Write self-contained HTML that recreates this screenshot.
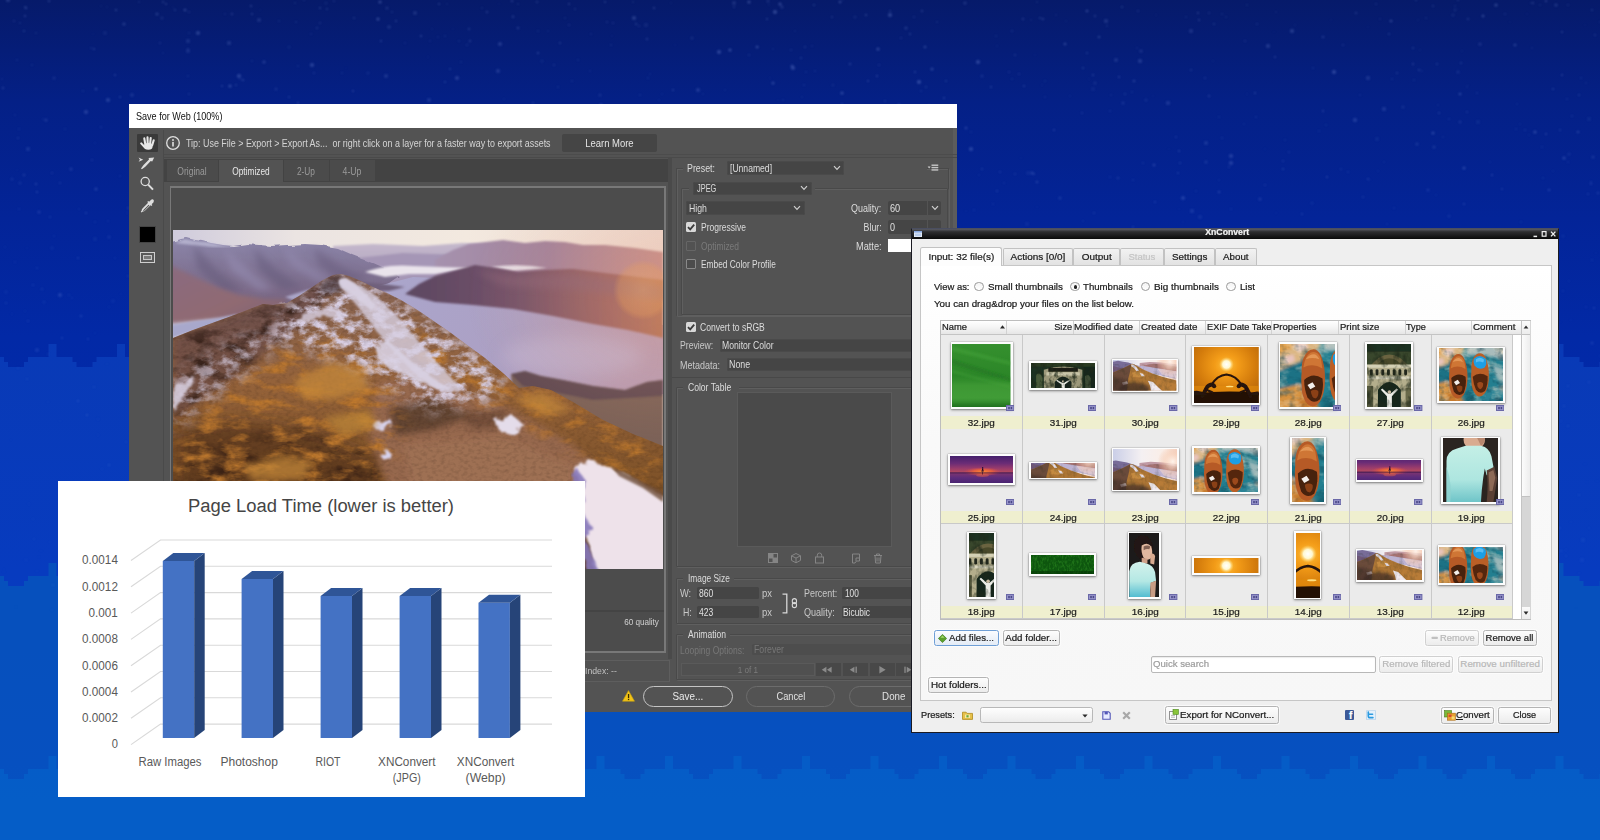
<!DOCTYPE html><html><head><meta charset="utf-8"><title>Image optimization comparison</title>
<style>html,body{margin:0;padding:0}body{width:1600px;height:840px;overflow:hidden;position:relative;background:#0a3fb4;font-family:"Liberation Sans",sans-serif}div{box-sizing:content-box}</style></head><body>
<svg id="bg" width="1600" height="840" viewBox="0 0 1600 840" style="position:absolute;left:0;top:0">
<defs><linearGradient id="bgg" x1="0" y1="0" x2="0" y2="1"><stop offset="0" stop-color="#061a6a"/><stop offset="0.12" stop-color="#042086"/><stop offset="0.26" stop-color="#032498"/><stop offset="0.40" stop-color="#0229a6"/><stop offset="0.68" stop-color="#002ab1"/><stop offset="0.91" stop-color="#002ab6"/><stop offset="1" stop-color="#012cb8"/></linearGradient><filter id="bb" x="-1%" y="-1%" width="102%" height="102%"><feGaussianBlur stdDeviation="0.7"/></filter><filter id="sb" x="-50%" y="-50%" width="200%" height="200%"><feGaussianBlur stdDeviation="0.8"/></filter></defs>
<rect width="1600" height="840" fill="url(#bgg)"/>
<path d="M0,840 L0,357 L-88.5,344 L-80.5,344 L-80.5,357 L-64.5,357 L-64.5,362 L-60.5,362 L-60.5,367 L-44.5,367 L-44.5,362 L-40.5,362 L-40.5,357 L-20.0,357 L-20.0,344 L-12.0,344 L-12.0,357 L4.0,357 L4.0,362 L8.0,362 L8.0,367 L24.0,367 L24.0,362 L28.0,362 L28.0,357 L48.5,357 L48.5,344 L56.5,344 L56.5,357 L72.5,357 L72.5,362 L76.5,362 L76.5,367 L92.5,367 L92.5,362 L96.5,362 L96.5,357 L117.0,357 L117.0,344 L125.0,344 L125.0,357 L141.0,357 L141.0,362 L145.0,362 L145.0,367 L161.0,367 L161.0,362 L165.0,362 L165.0,357 L185.5,357 L185.5,344 L193.5,344 L193.5,357 L209.5,357 L209.5,362 L213.5,362 L213.5,367 L229.5,367 L229.5,362 L233.5,362 L233.5,357 L254.0,357 L254.0,344 L262.0,344 L262.0,357 L278.0,357 L278.0,362 L282.0,362 L282.0,367 L298.0,367 L298.0,362 L302.0,362 L302.0,357 L322.5,357 L322.5,344 L330.5,344 L330.5,357 L346.5,357 L346.5,362 L350.5,362 L350.5,367 L366.5,367 L366.5,362 L370.5,362 L370.5,357 L391.0,357 L391.0,344 L399.0,344 L399.0,357 L415.0,357 L415.0,362 L419.0,362 L419.0,367 L435.0,367 L435.0,362 L439.0,362 L439.0,357 L459.5,357 L459.5,344 L467.5,344 L467.5,357 L483.5,357 L483.5,362 L487.5,362 L487.5,367 L503.5,367 L503.5,362 L507.5,362 L507.5,357 L528.0,357 L528.0,344 L536.0,344 L536.0,357 L552.0,357 L552.0,362 L556.0,362 L556.0,367 L572.0,367 L572.0,362 L576.0,362 L576.0,357 L596.5,357 L596.5,344 L604.5,344 L604.5,357 L620.5,357 L620.5,362 L624.5,362 L624.5,367 L640.5,367 L640.5,362 L644.5,362 L644.5,357 L665.0,357 L665.0,344 L673.0,344 L673.0,357 L689.0,357 L689.0,362 L693.0,362 L693.0,367 L709.0,367 L709.0,362 L713.0,362 L713.0,357 L733.5,357 L733.5,344 L741.5,344 L741.5,357 L757.5,357 L757.5,362 L761.5,362 L761.5,367 L777.5,367 L777.5,362 L781.5,362 L781.5,357 L802.0,357 L802.0,344 L810.0,344 L810.0,357 L826.0,357 L826.0,362 L830.0,362 L830.0,367 L846.0,367 L846.0,362 L850.0,362 L850.0,357 L870.5,357 L870.5,344 L878.5,344 L878.5,357 L894.5,357 L894.5,362 L898.5,362 L898.5,367 L914.5,367 L914.5,362 L918.5,362 L918.5,357 L939.0,357 L939.0,344 L947.0,344 L947.0,357 L963.0,357 L963.0,362 L967.0,362 L967.0,367 L983.0,367 L983.0,362 L987.0,362 L987.0,357 L1007.5,357 L1007.5,344 L1015.5,344 L1015.5,357 L1031.5,357 L1031.5,362 L1035.5,362 L1035.5,367 L1051.5,367 L1051.5,362 L1055.5,362 L1055.5,357 L1076.0,357 L1076.0,344 L1084.0,344 L1084.0,357 L1100.0,357 L1100.0,362 L1104.0,362 L1104.0,367 L1120.0,367 L1120.0,362 L1124.0,362 L1124.0,357 L1144.5,357 L1144.5,344 L1152.5,344 L1152.5,357 L1168.5,357 L1168.5,362 L1172.5,362 L1172.5,367 L1188.5,367 L1188.5,362 L1192.5,362 L1192.5,357 L1213.0,357 L1213.0,344 L1221.0,344 L1221.0,357 L1237.0,357 L1237.0,362 L1241.0,362 L1241.0,367 L1257.0,367 L1257.0,362 L1261.0,362 L1261.0,357 L1281.5,357 L1281.5,344 L1289.5,344 L1289.5,357 L1305.5,357 L1305.5,362 L1309.5,362 L1309.5,367 L1325.5,367 L1325.5,362 L1329.5,362 L1329.5,357 L1350.0,357 L1350.0,344 L1358.0,344 L1358.0,357 L1374.0,357 L1374.0,362 L1378.0,362 L1378.0,367 L1394.0,367 L1394.0,362 L1398.0,362 L1398.0,357 L1418.5,357 L1418.5,344 L1426.5,344 L1426.5,357 L1442.5,357 L1442.5,362 L1446.5,362 L1446.5,367 L1462.5,367 L1462.5,362 L1466.5,362 L1466.5,357 L1487.0,357 L1487.0,344 L1495.0,344 L1495.0,357 L1511.0,357 L1511.0,362 L1515.0,362 L1515.0,367 L1531.0,367 L1531.0,362 L1535.0,362 L1535.0,357 L1555.5,357 L1555.5,344 L1563.5,344 L1563.5,357 L1579.5,357 L1579.5,362 L1583.5,362 L1583.5,367 L1599.5,367 L1599.5,362 L1603.5,362 L1603.5,357 L1624.0,357 L1600,840 Z" fill="#2a85f8" fill-opacity="0.19" filter="url(#bb)"/>
<path d="M0,840 L0,576 L-88.5,563 L-80.5,563 L-80.5,576 L-64.5,576 L-64.5,581 L-60.5,581 L-60.5,586 L-44.5,586 L-44.5,581 L-40.5,581 L-40.5,576 L-20.0,576 L-20.0,563 L-12.0,563 L-12.0,576 L4.0,576 L4.0,581 L8.0,581 L8.0,586 L24.0,586 L24.0,581 L28.0,581 L28.0,576 L48.5,576 L48.5,563 L56.5,563 L56.5,576 L72.5,576 L72.5,581 L76.5,581 L76.5,586 L92.5,586 L92.5,581 L96.5,581 L96.5,576 L117.0,576 L117.0,563 L125.0,563 L125.0,576 L141.0,576 L141.0,581 L145.0,581 L145.0,586 L161.0,586 L161.0,581 L165.0,581 L165.0,576 L185.5,576 L185.5,563 L193.5,563 L193.5,576 L209.5,576 L209.5,581 L213.5,581 L213.5,586 L229.5,586 L229.5,581 L233.5,581 L233.5,576 L254.0,576 L254.0,563 L262.0,563 L262.0,576 L278.0,576 L278.0,581 L282.0,581 L282.0,586 L298.0,586 L298.0,581 L302.0,581 L302.0,576 L322.5,576 L322.5,563 L330.5,563 L330.5,576 L346.5,576 L346.5,581 L350.5,581 L350.5,586 L366.5,586 L366.5,581 L370.5,581 L370.5,576 L391.0,576 L391.0,563 L399.0,563 L399.0,576 L415.0,576 L415.0,581 L419.0,581 L419.0,586 L435.0,586 L435.0,581 L439.0,581 L439.0,576 L459.5,576 L459.5,563 L467.5,563 L467.5,576 L483.5,576 L483.5,581 L487.5,581 L487.5,586 L503.5,586 L503.5,581 L507.5,581 L507.5,576 L528.0,576 L528.0,563 L536.0,563 L536.0,576 L552.0,576 L552.0,581 L556.0,581 L556.0,586 L572.0,586 L572.0,581 L576.0,581 L576.0,576 L596.5,576 L596.5,563 L604.5,563 L604.5,576 L620.5,576 L620.5,581 L624.5,581 L624.5,586 L640.5,586 L640.5,581 L644.5,581 L644.5,576 L665.0,576 L665.0,563 L673.0,563 L673.0,576 L689.0,576 L689.0,581 L693.0,581 L693.0,586 L709.0,586 L709.0,581 L713.0,581 L713.0,576 L733.5,576 L733.5,563 L741.5,563 L741.5,576 L757.5,576 L757.5,581 L761.5,581 L761.5,586 L777.5,586 L777.5,581 L781.5,581 L781.5,576 L802.0,576 L802.0,563 L810.0,563 L810.0,576 L826.0,576 L826.0,581 L830.0,581 L830.0,586 L846.0,586 L846.0,581 L850.0,581 L850.0,576 L870.5,576 L870.5,563 L878.5,563 L878.5,576 L894.5,576 L894.5,581 L898.5,581 L898.5,586 L914.5,586 L914.5,581 L918.5,581 L918.5,576 L939.0,576 L939.0,563 L947.0,563 L947.0,576 L963.0,576 L963.0,581 L967.0,581 L967.0,586 L983.0,586 L983.0,581 L987.0,581 L987.0,576 L1007.5,576 L1007.5,563 L1015.5,563 L1015.5,576 L1031.5,576 L1031.5,581 L1035.5,581 L1035.5,586 L1051.5,586 L1051.5,581 L1055.5,581 L1055.5,576 L1076.0,576 L1076.0,563 L1084.0,563 L1084.0,576 L1100.0,576 L1100.0,581 L1104.0,581 L1104.0,586 L1120.0,586 L1120.0,581 L1124.0,581 L1124.0,576 L1144.5,576 L1144.5,563 L1152.5,563 L1152.5,576 L1168.5,576 L1168.5,581 L1172.5,581 L1172.5,586 L1188.5,586 L1188.5,581 L1192.5,581 L1192.5,576 L1213.0,576 L1213.0,563 L1221.0,563 L1221.0,576 L1237.0,576 L1237.0,581 L1241.0,581 L1241.0,586 L1257.0,586 L1257.0,581 L1261.0,581 L1261.0,576 L1281.5,576 L1281.5,563 L1289.5,563 L1289.5,576 L1305.5,576 L1305.5,581 L1309.5,581 L1309.5,586 L1325.5,586 L1325.5,581 L1329.5,581 L1329.5,576 L1350.0,576 L1350.0,563 L1358.0,563 L1358.0,576 L1374.0,576 L1374.0,581 L1378.0,581 L1378.0,586 L1394.0,586 L1394.0,581 L1398.0,581 L1398.0,576 L1418.5,576 L1418.5,563 L1426.5,563 L1426.5,576 L1442.5,576 L1442.5,581 L1446.5,581 L1446.5,586 L1462.5,586 L1462.5,581 L1466.5,581 L1466.5,576 L1487.0,576 L1487.0,563 L1495.0,563 L1495.0,576 L1511.0,576 L1511.0,581 L1515.0,581 L1515.0,586 L1531.0,586 L1531.0,581 L1535.0,581 L1535.0,576 L1555.5,576 L1555.5,563 L1563.5,563 L1563.5,576 L1579.5,576 L1579.5,581 L1583.5,581 L1583.5,586 L1599.5,586 L1599.5,581 L1603.5,581 L1603.5,576 L1624.0,576 L1600,840 Z" fill="#0da6b4" fill-opacity="0.2" filter="url(#bb)"/>
<path d="M0,840 L0,769 L-88.5,756 L-80.5,756 L-80.5,769 L-64.5,769 L-64.5,774 L-60.5,774 L-60.5,779 L-44.5,779 L-44.5,774 L-40.5,774 L-40.5,769 L-20.0,769 L-20.0,756 L-12.0,756 L-12.0,769 L4.0,769 L4.0,774 L8.0,774 L8.0,779 L24.0,779 L24.0,774 L28.0,774 L28.0,769 L48.5,769 L48.5,756 L56.5,756 L56.5,769 L72.5,769 L72.5,774 L76.5,774 L76.5,779 L92.5,779 L92.5,774 L96.5,774 L96.5,769 L117.0,769 L117.0,756 L125.0,756 L125.0,769 L141.0,769 L141.0,774 L145.0,774 L145.0,779 L161.0,779 L161.0,774 L165.0,774 L165.0,769 L185.5,769 L185.5,756 L193.5,756 L193.5,769 L209.5,769 L209.5,774 L213.5,774 L213.5,779 L229.5,779 L229.5,774 L233.5,774 L233.5,769 L254.0,769 L254.0,756 L262.0,756 L262.0,769 L278.0,769 L278.0,774 L282.0,774 L282.0,779 L298.0,779 L298.0,774 L302.0,774 L302.0,769 L322.5,769 L322.5,756 L330.5,756 L330.5,769 L346.5,769 L346.5,774 L350.5,774 L350.5,779 L366.5,779 L366.5,774 L370.5,774 L370.5,769 L391.0,769 L391.0,756 L399.0,756 L399.0,769 L415.0,769 L415.0,774 L419.0,774 L419.0,779 L435.0,779 L435.0,774 L439.0,774 L439.0,769 L459.5,769 L459.5,756 L467.5,756 L467.5,769 L483.5,769 L483.5,774 L487.5,774 L487.5,779 L503.5,779 L503.5,774 L507.5,774 L507.5,769 L528.0,769 L528.0,756 L536.0,756 L536.0,769 L552.0,769 L552.0,774 L556.0,774 L556.0,779 L572.0,779 L572.0,774 L576.0,774 L576.0,769 L596.5,769 L596.5,756 L604.5,756 L604.5,769 L620.5,769 L620.5,774 L624.5,774 L624.5,779 L640.5,779 L640.5,774 L644.5,774 L644.5,769 L665.0,769 L665.0,756 L673.0,756 L673.0,769 L689.0,769 L689.0,774 L693.0,774 L693.0,779 L709.0,779 L709.0,774 L713.0,774 L713.0,769 L733.5,769 L733.5,756 L741.5,756 L741.5,769 L757.5,769 L757.5,774 L761.5,774 L761.5,779 L777.5,779 L777.5,774 L781.5,774 L781.5,769 L802.0,769 L802.0,756 L810.0,756 L810.0,769 L826.0,769 L826.0,774 L830.0,774 L830.0,779 L846.0,779 L846.0,774 L850.0,774 L850.0,769 L870.5,769 L870.5,756 L878.5,756 L878.5,769 L894.5,769 L894.5,774 L898.5,774 L898.5,779 L914.5,779 L914.5,774 L918.5,774 L918.5,769 L939.0,769 L939.0,756 L947.0,756 L947.0,769 L963.0,769 L963.0,774 L967.0,774 L967.0,779 L983.0,779 L983.0,774 L987.0,774 L987.0,769 L1007.5,769 L1007.5,756 L1015.5,756 L1015.5,769 L1031.5,769 L1031.5,774 L1035.5,774 L1035.5,779 L1051.5,779 L1051.5,774 L1055.5,774 L1055.5,769 L1076.0,769 L1076.0,756 L1084.0,756 L1084.0,769 L1100.0,769 L1100.0,774 L1104.0,774 L1104.0,779 L1120.0,779 L1120.0,774 L1124.0,774 L1124.0,769 L1144.5,769 L1144.5,756 L1152.5,756 L1152.5,769 L1168.5,769 L1168.5,774 L1172.5,774 L1172.5,779 L1188.5,779 L1188.5,774 L1192.5,774 L1192.5,769 L1213.0,769 L1213.0,756 L1221.0,756 L1221.0,769 L1237.0,769 L1237.0,774 L1241.0,774 L1241.0,779 L1257.0,779 L1257.0,774 L1261.0,774 L1261.0,769 L1281.5,769 L1281.5,756 L1289.5,756 L1289.5,769 L1305.5,769 L1305.5,774 L1309.5,774 L1309.5,779 L1325.5,779 L1325.5,774 L1329.5,774 L1329.5,769 L1350.0,769 L1350.0,756 L1358.0,756 L1358.0,769 L1374.0,769 L1374.0,774 L1378.0,774 L1378.0,779 L1394.0,779 L1394.0,774 L1398.0,774 L1398.0,769 L1418.5,769 L1418.5,756 L1426.5,756 L1426.5,769 L1442.5,769 L1442.5,774 L1446.5,774 L1446.5,779 L1462.5,779 L1462.5,774 L1466.5,774 L1466.5,769 L1487.0,769 L1487.0,756 L1495.0,756 L1495.0,769 L1511.0,769 L1511.0,774 L1515.0,774 L1515.0,779 L1531.0,779 L1531.0,774 L1535.0,774 L1535.0,769 L1555.5,769 L1555.5,756 L1563.5,756 L1563.5,769 L1579.5,769 L1579.5,774 L1583.5,774 L1583.5,779 L1599.5,779 L1599.5,774 L1603.5,774 L1603.5,769 L1624.0,769 L1600,840 Z" fill="#0c9ee8" fill-opacity="0.15" filter="url(#bb)"/>
<g fill="#8aa2ea" filter="url(#sb)"><circle cx="1368" cy="78" r="2.1" opacity="0.18"/><circle cx="982" cy="76" r="1.6" opacity="0.14"/><circle cx="1331" cy="20" r="0.7" opacity="0.13"/><circle cx="387" cy="8" r="1.6" opacity="0.16"/><circle cx="946" cy="81" r="1.0" opacity="0.22"/><circle cx="504" cy="99" r="1.0" opacity="0.08"/><circle cx="901" cy="38" r="0.8" opacity="0.29"/><circle cx="1483" cy="16" r="1.3" opacity="0.33"/><circle cx="636" cy="24" r="1.0" opacity="0.27"/><circle cx="432" cy="29" r="1.1" opacity="0.08"/><circle cx="162" cy="18" r="1.6" opacity="0.12"/><circle cx="1231" cy="209" r="1.3" opacity="0.08"/><circle cx="673" cy="90" r="1.0" opacity="0.27"/><circle cx="1560" cy="322" r="0.7" opacity="0.08"/><circle cx="966" cy="211" r="0.8" opacity="0.08"/><circle cx="1468" cy="85" r="0.7" opacity="0.09"/><circle cx="1540" cy="5" r="0.8" opacity="0.20"/><circle cx="1169" cy="149" r="0.8" opacity="0.08"/><circle cx="1464" cy="168" r="1.6" opacity="0.25"/><circle cx="1394" cy="208" r="0.7" opacity="0.23"/><circle cx="20" cy="23" r="0.8" opacity="0.24"/><circle cx="1589" cy="528" r="1.1" opacity="0.06"/><circle cx="18" cy="138" r="1.0" opacity="0.18"/><circle cx="1206" cy="162" r="1.6" opacity="0.17"/><circle cx="1520" cy="124" r="0.9" opacity="0.09"/><circle cx="1326" cy="125" r="0.7" opacity="0.22"/><circle cx="648" cy="78" r="1.0" opacity="0.13"/><circle cx="225" cy="14" r="0.8" opacity="0.19"/><circle cx="1095" cy="83" r="1.6" opacity="0.13"/><circle cx="1428" cy="190" r="1.6" opacity="0.15"/><circle cx="1042" cy="85" r="0.8" opacity="0.12"/><circle cx="1265" cy="149" r="0.7" opacity="0.14"/><circle cx="102" cy="469" r="0.9" opacity="0.09"/><circle cx="1106" cy="21" r="2.1" opacity="0.19"/><circle cx="757" cy="47" r="1.3" opacity="0.30"/><circle cx="1247" cy="5" r="1.0" opacity="0.12"/><circle cx="19" cy="129" r="1.1" opacity="0.12"/><circle cx="37" cy="350" r="2.1" opacity="0.14"/><circle cx="311" cy="34" r="1.0" opacity="0.11"/><circle cx="60" cy="295" r="2.1" opacity="0.20"/><circle cx="770" cy="78" r="0.8" opacity="0.12"/><circle cx="312" cy="65" r="2.1" opacity="0.26"/><circle cx="518" cy="28" r="1.3" opacity="0.22"/><circle cx="17" cy="170" r="0.7" opacity="0.11"/><circle cx="650" cy="74" r="0.8" opacity="0.16"/><circle cx="1600" cy="356" r="0.8" opacity="0.15"/><circle cx="1568" cy="5" r="0.8" opacity="0.27"/><circle cx="1037" cy="2" r="1.0" opacity="0.14"/><circle cx="1295" cy="25" r="0.7" opacity="0.17"/><circle cx="1502" cy="189" r="0.9" opacity="0.23"/><circle cx="392" cy="12" r="0.9" opacity="0.18"/><circle cx="1095" cy="16" r="1.1" opacity="0.27"/><circle cx="1449" cy="216" r="1.6" opacity="0.11"/><circle cx="1209" cy="13" r="0.8" opacity="0.32"/><circle cx="1378" cy="171" r="0.9" opacity="0.09"/><circle cx="381" cy="41" r="1.0" opacity="0.27"/><circle cx="1000" cy="172" r="1.0" opacity="0.19"/><circle cx="1205" cy="78" r="1.0" opacity="0.19"/><circle cx="1045" cy="81" r="0.7" opacity="0.22"/><circle cx="15" cy="115" r="0.7" opacity="0.21"/><circle cx="1461" cy="63" r="1.0" opacity="0.22"/><circle cx="791" cy="50" r="0.8" opacity="0.27"/><circle cx="1196" cy="191" r="0.9" opacity="0.13"/><circle cx="591" cy="34" r="1.1" opacity="0.10"/><circle cx="1285" cy="140" r="1.1" opacity="0.11"/><circle cx="354" cy="18" r="0.9" opacity="0.22"/><circle cx="438" cy="37" r="1.1" opacity="0.10"/><circle cx="1015" cy="55" r="1.3" opacity="0.13"/><circle cx="1464" cy="204" r="1.1" opacity="0.23"/><circle cx="95" cy="143" r="0.8" opacity="0.13"/><circle cx="27" cy="248" r="0.7" opacity="0.11"/><circle cx="450" cy="69" r="1.0" opacity="0.22"/><circle cx="380" cy="2" r="1.6" opacity="0.31"/><circle cx="252" cy="61" r="1.1" opacity="0.11"/><circle cx="1589" cy="119" r="2.1" opacity="0.08"/><circle cx="915" cy="72" r="1.0" opacity="0.27"/><circle cx="1542" cy="147" r="1.3" opacity="0.08"/><circle cx="1099" cy="37" r="1.3" opacity="0.24"/><circle cx="20" cy="183" r="1.6" opacity="0.11"/><circle cx="612" cy="36" r="0.8" opacity="0.11"/><circle cx="1009" cy="72" r="1.0" opacity="0.17"/><circle cx="52" cy="610" r="1.3" opacity="0.04"/><circle cx="222" cy="86" r="0.9" opacity="0.26"/><circle cx="978" cy="62" r="2.1" opacity="0.29"/><circle cx="919" cy="82" r="2.1" opacity="0.30"/><circle cx="317" cy="28" r="1.0" opacity="0.20"/><circle cx="1168" cy="103" r="2.1" opacity="0.19"/><circle cx="1587" cy="482" r="0.9" opacity="0.04"/><circle cx="1319" cy="131" r="1.1" opacity="0.12"/><circle cx="1579" cy="573" r="0.9" opacity="0.05"/><circle cx="749" cy="55" r="1.3" opacity="0.10"/><circle cx="1260" cy="199" r="1.6" opacity="0.18"/><circle cx="188" cy="41" r="2.1" opacity="0.16"/><circle cx="87" cy="415" r="1.3" opacity="0.13"/><circle cx="1403" cy="107" r="1.6" opacity="0.12"/><circle cx="842" cy="104" r="1.0" opacity="0.22"/><circle cx="675" cy="45" r="0.8" opacity="0.10"/><circle cx="1268" cy="46" r="2.1" opacity="0.22"/><circle cx="50" cy="542" r="1.0" opacity="0.05"/><circle cx="1341" cy="169" r="1.6" opacity="0.07"/><circle cx="1012" cy="79" r="0.7" opacity="0.22"/><circle cx="1141" cy="51" r="1.6" opacity="0.18"/><circle cx="314" cy="73" r="1.0" opacity="0.19"/><circle cx="944" cy="98" r="1.0" opacity="0.27"/><circle cx="289" cy="97" r="0.9" opacity="0.22"/><circle cx="1581" cy="78" r="0.9" opacity="0.14"/><circle cx="877" cy="76" r="0.9" opacity="0.30"/><circle cx="54" cy="236" r="1.3" opacity="0.06"/><circle cx="1426" cy="18" r="0.8" opacity="0.22"/><circle cx="1032" cy="173" r="1.6" opacity="0.22"/><circle cx="1397" cy="73" r="0.9" opacity="0.22"/><circle cx="86" cy="213" r="1.1" opacity="0.22"/><circle cx="1313" cy="68" r="1.0" opacity="0.13"/><circle cx="1532" cy="48" r="0.9" opacity="0.11"/><circle cx="1492" cy="175" r="1.1" opacity="0.25"/><circle cx="1477" cy="93" r="0.9" opacity="0.16"/><circle cx="1040" cy="18" r="1.1" opacity="0.22"/><circle cx="79" cy="209" r="1.0" opacity="0.09"/><circle cx="879" cy="65" r="1.0" opacity="0.17"/><circle cx="1589" cy="382" r="1.6" opacity="0.07"/><circle cx="613" cy="23" r="1.0" opacity="0.17"/><circle cx="439" cy="4" r="0.9" opacity="0.27"/><circle cx="578" cy="60" r="1.1" opacity="0.11"/><circle cx="236" cy="85" r="1.0" opacity="0.20"/><circle cx="719" cy="52" r="2.1" opacity="0.29"/><circle cx="1012" cy="31" r="1.3" opacity="0.11"/><circle cx="1125" cy="94" r="1.3" opacity="0.12"/><circle cx="1229" cy="167" r="1.0" opacity="0.17"/><circle cx="37" cy="192" r="1.1" opacity="0.24"/><circle cx="1460" cy="122" r="1.3" opacity="0.18"/><circle cx="116" cy="10" r="1.1" opacity="0.31"/><circle cx="1132" cy="92" r="0.8" opacity="0.22"/><circle cx="993" cy="204" r="1.3" opacity="0.07"/><circle cx="109" cy="237" r="1.6" opacity="0.13"/><circle cx="1455" cy="10" r="0.9" opacity="0.25"/><circle cx="240" cy="79" r="1.0" opacity="0.13"/><circle cx="6" cy="292" r="2.1" opacity="0.06"/><circle cx="166" cy="4" r="1.0" opacity="0.26"/><circle cx="1034" cy="174" r="0.9" opacity="0.25"/><circle cx="1417" cy="144" r="1.6" opacity="0.17"/><circle cx="1087" cy="11" r="1.3" opacity="0.30"/><circle cx="86" cy="112" r="2.1" opacity="0.23"/><circle cx="1110" cy="111" r="1.0" opacity="0.15"/><circle cx="1093" cy="75" r="1.0" opacity="0.27"/><circle cx="295" cy="3" r="0.9" opacity="0.15"/><circle cx="1087" cy="53" r="0.9" opacity="0.25"/><circle cx="189" cy="12" r="1.0" opacity="0.17"/><circle cx="42" cy="289" r="1.6" opacity="0.08"/><circle cx="108" cy="221" r="1.0" opacity="0.10"/><circle cx="1155" cy="202" r="0.9" opacity="0.25"/><circle cx="1387" cy="224" r="0.8" opacity="0.16"/><circle cx="518" cy="4" r="0.9" opacity="0.15"/><circle cx="11" cy="440" r="0.8" opacity="0.04"/><circle cx="538" cy="53" r="1.0" opacity="0.32"/><circle cx="654" cy="8" r="1.1" opacity="0.29"/><circle cx="634" cy="18" r="2.1" opacity="0.24"/><circle cx="1323" cy="111" r="1.0" opacity="0.28"/><circle cx="1505" cy="14" r="0.7" opacity="0.32"/><circle cx="1206" cy="143" r="2.1" opacity="0.17"/><circle cx="1418" cy="20" r="1.1" opacity="0.08"/><circle cx="1455" cy="6" r="0.9" opacity="0.14"/><circle cx="107" cy="364" r="0.8" opacity="0.08"/><circle cx="342" cy="73" r="0.7" opacity="0.25"/><circle cx="15" cy="262" r="1.3" opacity="0.07"/><circle cx="279" cy="21" r="0.8" opacity="0.22"/><circle cx="840" cy="2" r="1.3" opacity="0.32"/><circle cx="88" cy="339" r="1.1" opacity="0.18"/><circle cx="1480" cy="44" r="1.6" opacity="0.18"/><circle cx="558" cy="87" r="0.7" opacity="0.27"/><circle cx="115" cy="258" r="0.7" opacity="0.19"/><circle cx="1591" cy="184" r="1.1" opacity="0.20"/><circle cx="289" cy="47" r="1.6" opacity="0.09"/><circle cx="572" cy="81" r="0.8" opacity="0.23"/><circle cx="1178" cy="173" r="1.0" opacity="0.22"/><circle cx="320" cy="23" r="1.0" opacity="0.18"/><circle cx="1312" cy="203" r="1.6" opacity="0.09"/><circle cx="198" cy="33" r="2.1" opacity="0.25"/><circle cx="662" cy="94" r="0.8" opacity="0.15"/><circle cx="445" cy="36" r="0.8" opacity="0.21"/><circle cx="26" cy="8" r="1.1" opacity="0.33"/><circle cx="1043" cy="19" r="1.0" opacity="0.33"/><circle cx="1588" cy="194" r="1.0" opacity="0.19"/><circle cx="1433" cy="6" r="1.1" opacity="0.19"/><circle cx="812" cy="46" r="1.0" opacity="0.11"/><circle cx="17" cy="60" r="0.8" opacity="0.25"/><circle cx="1140" cy="61" r="2.1" opacity="0.22"/><circle cx="1356" cy="13" r="1.3" opacity="0.16"/><circle cx="850" cy="64" r="1.3" opacity="0.20"/><circle cx="640" cy="95" r="0.8" opacity="0.23"/><circle cx="52" cy="173" r="1.0" opacity="0.17"/><circle cx="1546" cy="1" r="1.1" opacity="0.33"/><circle cx="1222" cy="14" r="0.8" opacity="0.22"/><circle cx="1093" cy="89" r="2.1" opacity="0.07"/><circle cx="1179" cy="209" r="0.8" opacity="0.09"/><circle cx="1389" cy="34" r="1.1" opacity="0.21"/><circle cx="1343" cy="45" r="1.0" opacity="0.19"/><circle cx="50" cy="217" r="1.3" opacity="0.10"/><circle cx="554" cy="65" r="1.1" opacity="0.16"/><circle cx="1348" cy="172" r="0.9" opacity="0.16"/><circle cx="1569" cy="154" r="1.6" opacity="0.11"/><circle cx="1561" cy="551" r="1.6" opacity="0.06"/><circle cx="188" cy="76" r="0.8" opacity="0.23"/><circle cx="801" cy="58" r="1.1" opacity="0.21"/><circle cx="1553" cy="171" r="1.0" opacity="0.08"/><circle cx="1255" cy="93" r="1.0" opacity="0.27"/><circle cx="1180" cy="163" r="0.9" opacity="0.22"/><circle cx="33" cy="285" r="1.0" opacity="0.16"/><circle cx="121" cy="294" r="0.8" opacity="0.10"/><circle cx="4" cy="569" r="0.8" opacity="0.04"/><circle cx="1066" cy="21" r="0.7" opacity="0.18"/><circle cx="163" cy="53" r="1.0" opacity="0.09"/><circle cx="1439" cy="113" r="1.0" opacity="0.23"/><circle cx="1496" cy="5" r="1.6" opacity="0.29"/><circle cx="1594" cy="308" r="1.1" opacity="0.20"/><circle cx="239" cy="76" r="2.1" opacity="0.27"/><circle cx="109" cy="465" r="1.3" opacity="0.12"/><circle cx="1438" cy="105" r="0.7" opacity="0.20"/><circle cx="533" cy="103" r="1.0" opacity="0.20"/><circle cx="327" cy="9" r="1.0" opacity="0.22"/><circle cx="126" cy="442" r="1.0" opacity="0.09"/><circle cx="72" cy="298" r="0.9" opacity="0.11"/><circle cx="1265" cy="185" r="1.0" opacity="0.17"/><circle cx="1510" cy="22" r="0.7" opacity="0.09"/><circle cx="53" cy="585" r="1.3" opacity="0.09"/><circle cx="230" cy="86" r="1.6" opacity="0.29"/><circle cx="1490" cy="162" r="0.9" opacity="0.09"/><circle cx="1123" cy="103" r="1.6" opacity="0.15"/><circle cx="115" cy="75" r="1.1" opacity="0.23"/><circle cx="26" cy="560" r="2.1" opacity="0.04"/><circle cx="1596" cy="253" r="0.7" opacity="0.09"/><circle cx="39" cy="212" r="1.6" opacity="0.18"/><circle cx="101" cy="6" r="1.1" opacity="0.08"/><circle cx="487" cy="12" r="1.0" opacity="0.30"/><circle cx="1516" cy="129" r="0.8" opacity="0.21"/><circle cx="5" cy="247" r="0.8" opacity="0.14"/><circle cx="1060" cy="198" r="1.6" opacity="0.17"/><circle cx="1023" cy="19" r="0.9" opacity="0.32"/><circle cx="81" cy="316" r="1.3" opacity="0.17"/><circle cx="565" cy="18" r="0.8" opacity="0.20"/><circle cx="1566" cy="556" r="1.0" opacity="0.09"/><circle cx="37" cy="268" r="1.1" opacity="0.13"/><circle cx="1031" cy="20" r="0.9" opacity="0.11"/><circle cx="1571" cy="522" r="1.0" opacity="0.05"/><circle cx="997" cy="46" r="0.7" opacity="0.18"/><circle cx="1138" cy="11" r="0.9" opacity="0.21"/><circle cx="1567" cy="99" r="0.8" opacity="0.23"/><circle cx="43" cy="119" r="0.8" opacity="0.14"/><circle cx="105" cy="33" r="2.1" opacity="0.09"/><circle cx="929" cy="105" r="1.1" opacity="0.16"/><circle cx="671" cy="3" r="0.8" opacity="0.13"/><circle cx="1226" cy="17" r="0.9" opacity="0.12"/><circle cx="1276" cy="12" r="0.7" opacity="0.20"/><circle cx="692" cy="38" r="1.6" opacity="0.12"/><circle cx="1592" cy="260" r="1.0" opacity="0.12"/><circle cx="1137" cy="48" r="0.7" opacity="0.21"/><circle cx="991" cy="87" r="1.0" opacity="0.27"/><circle cx="1021" cy="158" r="0.7" opacity="0.11"/><circle cx="1392" cy="79" r="0.7" opacity="0.26"/><circle cx="1133" cy="227" r="1.1" opacity="0.18"/><circle cx="120" cy="97" r="1.0" opacity="0.24"/><circle cx="1045" cy="97" r="0.8" opacity="0.19"/><circle cx="1568" cy="162" r="1.3" opacity="0.07"/><circle cx="83" cy="91" r="1.3" opacity="0.09"/><circle cx="1564" cy="406" r="1.1" opacity="0.14"/><circle cx="251" cy="6" r="1.1" opacity="0.29"/><circle cx="814" cy="5" r="1.1" opacity="0.22"/><circle cx="792" cy="66" r="1.6" opacity="0.23"/><circle cx="157" cy="14" r="1.6" opacity="0.21"/><circle cx="1586" cy="307" r="1.0" opacity="0.11"/><circle cx="1214" cy="24" r="1.0" opacity="0.22"/><circle cx="41" cy="551" r="0.7" opacity="0.08"/><circle cx="1122" cy="7" r="1.0" opacity="0.24"/><circle cx="1579" cy="95" r="1.0" opacity="0.21"/><circle cx="1419" cy="70" r="0.9" opacity="0.29"/><circle cx="1083" cy="68" r="1.1" opacity="0.22"/><circle cx="71" cy="169" r="1.6" opacity="0.19"/><circle cx="1380" cy="19" r="0.8" opacity="0.18"/><circle cx="1247" cy="94" r="0.7" opacity="0.15"/><circle cx="24" cy="175" r="1.3" opacity="0.18"/><circle cx="430" cy="41" r="0.8" opacity="0.19"/><circle cx="482" cy="8" r="0.7" opacity="0.24"/><circle cx="457" cy="78" r="2.1" opacity="0.23"/><circle cx="802" cy="97" r="1.0" opacity="0.09"/><circle cx="890" cy="11" r="1.0" opacity="0.21"/><circle cx="1585" cy="25" r="0.8" opacity="0.08"/><circle cx="1583" cy="540" r="2.1" opacity="0.08"/><circle cx="932" cy="69" r="1.6" opacity="0.25"/><circle cx="498" cy="71" r="2.1" opacity="0.20"/><circle cx="1562" cy="75" r="1.0" opacity="0.26"/><circle cx="1037" cy="207" r="0.7" opacity="0.11"/><circle cx="298" cy="103" r="1.0" opacity="0.28"/><circle cx="1065" cy="44" r="1.3" opacity="0.31"/><circle cx="512" cy="1" r="1.3" opacity="0.21"/><circle cx="18" cy="368" r="1.0" opacity="0.11"/><circle cx="775" cy="12" r="2.1" opacity="0.30"/><circle cx="54" cy="78" r="1.6" opacity="0.13"/><circle cx="1156" cy="15" r="0.8" opacity="0.12"/><circle cx="260" cy="10" r="0.7" opacity="0.14"/><circle cx="1035" cy="55" r="0.7" opacity="0.11"/><circle cx="368" cy="73" r="1.6" opacity="0.10"/><circle cx="537" cy="2" r="1.3" opacity="0.15"/><circle cx="1133" cy="180" r="0.8" opacity="0.24"/><circle cx="65" cy="129" r="1.0" opacity="0.12"/><circle cx="1595" cy="35" r="0.9" opacity="0.23"/><circle cx="1384" cy="162" r="1.0" opacity="0.09"/><circle cx="1568" cy="426" r="1.1" opacity="0.11"/><circle cx="795" cy="31" r="0.7" opacity="0.19"/><circle cx="926" cy="87" r="1.3" opacity="0.12"/><circle cx="1146" cy="100" r="1.6" opacity="0.11"/><circle cx="899" cy="105" r="1.6" opacity="0.19"/><circle cx="93" cy="34" r="0.7" opacity="0.11"/><circle cx="1082" cy="113" r="1.0" opacity="0.19"/><circle cx="1370" cy="180" r="0.8" opacity="0.07"/><circle cx="259" cy="20" r="2.1" opacity="0.17"/><circle cx="1560" cy="130" r="1.0" opacity="0.20"/><circle cx="749" cy="2" r="1.6" opacity="0.30"/><circle cx="94" cy="49" r="1.1" opacity="0.24"/><circle cx="1585" cy="464" r="1.0" opacity="0.04"/><circle cx="974" cy="210" r="1.0" opacity="0.13"/><circle cx="1368" cy="27" r="0.8" opacity="0.09"/><circle cx="639" cy="26" r="0.9" opacity="0.19"/><circle cx="910" cy="34" r="1.0" opacity="0.27"/><circle cx="773" cy="49" r="0.9" opacity="0.10"/><circle cx="78" cy="401" r="1.3" opacity="0.14"/><circle cx="175" cy="10" r="1.1" opacity="0.20"/><circle cx="1458" cy="72" r="1.6" opacity="0.14"/><circle cx="1467" cy="87" r="0.8" opacity="0.17"/><circle cx="1384" cy="109" r="2.1" opacity="0.19"/><circle cx="189" cy="33" r="0.9" opacity="0.14"/><circle cx="590" cy="71" r="1.0" opacity="0.10"/><circle cx="1037" cy="182" r="1.3" opacity="0.22"/><circle cx="1569" cy="281" r="0.8" opacity="0.14"/><circle cx="48" cy="354" r="1.1" opacity="0.12"/><circle cx="19" cy="209" r="0.8" opacity="0.21"/><circle cx="965" cy="3" r="1.6" opacity="0.20"/><circle cx="1292" cy="31" r="2.1" opacity="0.24"/><circle cx="806" cy="72" r="0.9" opacity="0.14"/><circle cx="500" cy="44" r="2.1" opacity="0.21"/><circle cx="232" cy="14" r="0.9" opacity="0.32"/><circle cx="1245" cy="41" r="0.9" opacity="0.19"/><circle cx="833" cy="85" r="1.6" opacity="0.08"/><circle cx="95" cy="239" r="2.1" opacity="0.08"/><circle cx="1579" cy="495" r="1.3" opacity="0.09"/><circle cx="758" cy="47" r="1.1" opacity="0.10"/><circle cx="1116" cy="60" r="2.1" opacity="0.17"/><circle cx="575" cy="9" r="0.8" opacity="0.31"/><circle cx="1070" cy="96" r="1.1" opacity="0.08"/><circle cx="94" cy="387" r="1.3" opacity="0.09"/><circle cx="1586" cy="83" r="1.0" opacity="0.10"/><circle cx="27" cy="379" r="1.1" opacity="0.12"/><circle cx="1274" cy="32" r="0.7" opacity="0.08"/><circle cx="1213" cy="61" r="1.0" opacity="0.08"/><circle cx="769" cy="5" r="0.7" opacity="0.17"/><circle cx="1582" cy="560" r="2.1" opacity="0.07"/><circle cx="1453" cy="15" r="1.6" opacity="0.11"/><circle cx="12" cy="314" r="1.0" opacity="0.07"/><circle cx="1244" cy="124" r="0.8" opacity="0.16"/><circle cx="160" cy="43" r="0.8" opacity="0.30"/><circle cx="421" cy="36" r="1.0" opacity="0.32"/><circle cx="1553" cy="89" r="1.0" opacity="0.24"/><circle cx="185" cy="10" r="1.3" opacity="0.30"/><circle cx="98" cy="419" r="1.6" opacity="0.04"/><circle cx="1110" cy="177" r="0.8" opacity="0.22"/><circle cx="33" cy="519" r="0.9" opacity="0.09"/><circle cx="982" cy="169" r="1.1" opacity="0.19"/><circle cx="979" cy="175" r="0.7" opacity="0.19"/><circle cx="1436" cy="195" r="0.7" opacity="0.17"/><circle cx="1468" cy="19" r="1.3" opacity="0.16"/><circle cx="1191" cy="31" r="2.1" opacity="0.18"/><circle cx="1283" cy="161" r="1.0" opacity="0.18"/><circle cx="1433" cy="133" r="1.6" opacity="0.25"/><circle cx="1186" cy="17" r="0.9" opacity="0.14"/><circle cx="95" cy="222" r="0.8" opacity="0.20"/><circle cx="36" cy="33" r="0.9" opacity="0.15"/><circle cx="971" cy="149" r="2.1" opacity="0.27"/><circle cx="843" cy="0" r="0.9" opacity="0.10"/><circle cx="469" cy="29" r="1.3" opacity="0.17"/><circle cx="304" cy="0" r="0.8" opacity="0.28"/><circle cx="1571" cy="320" r="0.7" opacity="0.12"/><circle cx="1529" cy="135" r="1.0" opacity="0.08"/><circle cx="29" cy="504" r="0.9" opacity="0.08"/><circle cx="866" cy="15" r="1.1" opacity="0.30"/><circle cx="346" cy="68" r="0.7" opacity="0.07"/><circle cx="1517" cy="104" r="1.0" opacity="0.09"/><circle cx="855" cy="17" r="1.6" opacity="0.10"/><circle cx="1183" cy="222" r="0.8" opacity="0.10"/><circle cx="601" cy="105" r="1.6" opacity="0.28"/><circle cx="1111" cy="95" r="1.0" opacity="0.10"/><circle cx="1360" cy="95" r="0.8" opacity="0.19"/><circle cx="378" cy="19" r="1.6" opacity="0.32"/><circle cx="334" cy="1" r="0.9" opacity="0.20"/><circle cx="1531" cy="3" r="1.0" opacity="0.11"/><circle cx="1578" cy="132" r="1.3" opacity="0.23"/><circle cx="1546" cy="134" r="1.0" opacity="0.26"/><circle cx="1478" cy="122" r="2.1" opacity="0.08"/><circle cx="128" cy="208" r="1.0" opacity="0.20"/><circle cx="1515" cy="45" r="1.3" opacity="0.28"/><circle cx="127" cy="213" r="0.9" opacity="0.08"/><circle cx="124" cy="24" r="1.6" opacity="0.22"/><circle cx="415" cy="13" r="2.1" opacity="0.17"/><circle cx="25" cy="7" r="1.3" opacity="0.12"/><circle cx="25" cy="311" r="1.0" opacity="0.08"/><circle cx="971" cy="132" r="1.0" opacity="0.12"/><circle cx="60" cy="421" r="0.7" opacity="0.11"/><circle cx="396" cy="21" r="1.0" opacity="0.27"/><circle cx="1416" cy="0" r="0.9" opacity="0.24"/><circle cx="966" cy="128" r="1.3" opacity="0.26"/><circle cx="1153" cy="96" r="0.7" opacity="0.13"/><circle cx="188" cy="51" r="2.1" opacity="0.15"/><circle cx="128" cy="276" r="0.9" opacity="0.15"/><circle cx="542" cy="61" r="1.6" opacity="0.09"/><circle cx="28" cy="321" r="1.0" opacity="0.17"/><circle cx="1355" cy="120" r="2.1" opacity="0.22"/><circle cx="1422" cy="71" r="0.9" opacity="0.11"/><circle cx="1368" cy="179" r="1.0" opacity="0.24"/><circle cx="6" cy="303" r="1.3" opacity="0.10"/><circle cx="461" cy="62" r="1.0" opacity="0.12"/><circle cx="1563" cy="291" r="1.1" opacity="0.11"/><circle cx="1598" cy="193" r="1.3" opacity="0.17"/><circle cx="243" cy="80" r="1.1" opacity="0.30"/><circle cx="25" cy="16" r="1.0" opacity="0.33"/><circle cx="32" cy="65" r="0.7" opacity="0.24"/><circle cx="773" cy="83" r="1.6" opacity="0.25"/><circle cx="778" cy="100" r="0.7" opacity="0.09"/><circle cx="386" cy="76" r="2.1" opacity="0.17"/><circle cx="163" cy="2" r="1.0" opacity="0.27"/><circle cx="1593" cy="157" r="1.6" opacity="0.16"/><circle cx="815" cy="71" r="0.8" opacity="0.25"/><circle cx="1586" cy="510" r="0.8" opacity="0.04"/><circle cx="868" cy="81" r="1.0" opacity="0.26"/><circle cx="1592" cy="343" r="1.6" opacity="0.15"/><circle cx="132" cy="95" r="2.1" opacity="0.13"/><circle cx="12" cy="179" r="1.6" opacity="0.11"/><circle cx="16" cy="607" r="1.0" opacity="0.03"/><circle cx="28" cy="149" r="2.1" opacity="0.16"/><circle cx="1094" cy="213" r="1.1" opacity="0.16"/><circle cx="1543" cy="178" r="0.7" opacity="0.22"/><circle cx="793" cy="68" r="2.1" opacity="0.26"/><circle cx="108" cy="100" r="2.1" opacity="0.24"/><circle cx="296" cy="22" r="1.0" opacity="0.15"/><circle cx="1327" cy="177" r="1.0" opacity="0.26"/><circle cx="937" cy="22" r="1.0" opacity="0.14"/><circle cx="429" cy="100" r="2.1" opacity="0.17"/><circle cx="1257" cy="24" r="0.8" opacity="0.28"/><circle cx="447" cy="4" r="0.9" opacity="0.10"/><circle cx="1334" cy="72" r="2.1" opacity="0.29"/><circle cx="1209" cy="96" r="1.1" opacity="0.26"/><circle cx="607" cy="22" r="0.9" opacity="0.21"/><circle cx="1199" cy="20" r="1.1" opacity="0.25"/><circle cx="69" cy="295" r="1.3" opacity="0.08"/><circle cx="405" cy="43" r="0.7" opacity="0.23"/><circle cx="1054" cy="130" r="1.1" opacity="0.23"/><circle cx="1134" cy="81" r="1.3" opacity="0.23"/><circle cx="1256" cy="117" r="0.9" opacity="0.16"/><circle cx="1559" cy="528" r="1.6" opacity="0.10"/><circle cx="734" cy="7" r="1.1" opacity="0.18"/><circle cx="1004" cy="183" r="1.0" opacity="0.10"/><circle cx="459" cy="41" r="0.7" opacity="0.24"/><circle cx="1323" cy="37" r="1.3" opacity="0.21"/><circle cx="428" cy="57" r="0.8" opacity="0.12"/><circle cx="1027" cy="224" r="2.1" opacity="0.07"/><circle cx="470" cy="41" r="1.3" opacity="0.19"/><circle cx="59" cy="591" r="1.0" opacity="0.06"/><circle cx="783" cy="100" r="0.7" opacity="0.23"/><circle cx="1231" cy="156" r="2.1" opacity="0.23"/><circle cx="1549" cy="190" r="1.3" opacity="0.21"/><circle cx="1107" cy="26" r="0.7" opacity="0.31"/><circle cx="1434" cy="147" r="1.6" opacity="0.17"/><circle cx="62" cy="338" r="1.3" opacity="0.14"/><circle cx="276" cy="89" r="1.6" opacity="0.13"/><circle cx="298" cy="66" r="0.7" opacity="0.29"/><circle cx="96" cy="89" r="1.3" opacity="0.29"/><circle cx="229" cy="43" r="2.1" opacity="0.19"/><circle cx="453" cy="29" r="0.7" opacity="0.11"/><circle cx="1191" cy="70" r="0.9" opacity="0.22"/><circle cx="120" cy="176" r="0.8" opacity="0.19"/><circle cx="611" cy="45" r="1.0" opacity="0.14"/><circle cx="600" cy="95" r="1.6" opacity="0.13"/><circle cx="906" cy="28" r="1.6" opacity="0.20"/><circle cx="1563" cy="236" r="1.6" opacity="0.09"/><circle cx="1564" cy="158" r="1.6" opacity="0.26"/><circle cx="842" cy="93" r="1.6" opacity="0.29"/><circle cx="513" cy="17" r="0.9" opacity="0.28"/><circle cx="101" cy="127" r="1.6" opacity="0.07"/><circle cx="698" cy="90" r="2.1" opacity="0.20"/><circle cx="113" cy="301" r="2.1" opacity="0.06"/><circle cx="1222" cy="138" r="1.1" opacity="0.14"/><circle cx="513" cy="16" r="0.8" opacity="0.18"/><circle cx="1443" cy="137" r="0.7" opacity="0.21"/><circle cx="39" cy="557" r="1.1" opacity="0.03"/><circle cx="467" cy="45" r="0.8" opacity="0.27"/><circle cx="1527" cy="14" r="0.8" opacity="0.11"/><circle cx="921" cy="91" r="0.9" opacity="0.15"/><circle cx="734" cy="3" r="2.1" opacity="0.17"/><circle cx="1460" cy="94" r="1.3" opacity="0.29"/><circle cx="1019" cy="74" r="0.9" opacity="0.19"/><circle cx="1467" cy="112" r="0.9" opacity="0.20"/><circle cx="2" cy="79" r="0.7" opacity="0.20"/><circle cx="885" cy="101" r="1.0" opacity="0.18"/><circle cx="768" cy="1" r="1.6" opacity="0.16"/><circle cx="1283" cy="169" r="1.1" opacity="0.22"/><circle cx="1302" cy="214" r="1.0" opacity="0.20"/><circle cx="3" cy="88" r="1.3" opacity="0.19"/><circle cx="1154" cy="165" r="1.3" opacity="0.26"/><circle cx="60" cy="183" r="1.0" opacity="0.18"/><circle cx="1437" cy="64" r="1.0" opacity="0.21"/><circle cx="91" cy="48" r="0.7" opacity="0.26"/><circle cx="1562" cy="32" r="1.0" opacity="0.26"/><circle cx="1525" cy="130" r="1.1" opacity="0.15"/><circle cx="96" cy="189" r="1.6" opacity="0.22"/><circle cx="1592" cy="10" r="1.0" opacity="0.22"/><circle cx="1056" cy="15" r="1.0" opacity="0.10"/><circle cx="14" cy="21" r="0.9" opacity="0.21"/><circle cx="1119" cy="77" r="0.9" opacity="0.30"/><circle cx="1533" cy="3" r="1.1" opacity="0.25"/><circle cx="832" cy="17" r="0.8" opacity="0.33"/><circle cx="646" cy="25" r="2.1" opacity="0.10"/><circle cx="1363" cy="197" r="1.1" opacity="0.16"/><circle cx="353" cy="91" r="1.0" opacity="0.26"/><circle cx="173" cy="7" r="0.7" opacity="0.13"/><circle cx="922" cy="11" r="1.0" opacity="0.30"/><circle cx="1420" cy="50" r="1.0" opacity="0.08"/><circle cx="1376" cy="4" r="0.7" opacity="0.32"/><circle cx="95" cy="333" r="1.1" opacity="0.06"/><circle cx="703" cy="94" r="1.0" opacity="0.09"/><circle cx="647" cy="39" r="1.0" opacity="0.29"/><circle cx="1597" cy="481" r="1.0" opacity="0.04"/><circle cx="24" cy="31" r="1.0" opacity="0.24"/><circle cx="1568" cy="386" r="1.0" opacity="0.13"/><circle cx="37" cy="571" r="1.0" opacity="0.05"/><circle cx="767" cy="19" r="1.0" opacity="0.27"/><circle cx="925" cy="47" r="1.3" opacity="0.28"/><circle cx="1413" cy="48" r="1.1" opacity="0.20"/><circle cx="109" cy="307" r="1.0" opacity="0.08"/><circle cx="34" cy="539" r="1.0" opacity="0.09"/><circle cx="1414" cy="80" r="1.3" opacity="0.08"/><circle cx="1561" cy="421" r="0.8" opacity="0.13"/><circle cx="98" cy="435" r="0.9" opacity="0.08"/><circle cx="389" cy="27" r="2.1" opacity="0.13"/><circle cx="569" cy="25" r="0.9" opacity="0.19"/><circle cx="252" cy="14" r="1.1" opacity="0.23"/><circle cx="1143" cy="163" r="1.0" opacity="0.14"/><circle cx="996" cy="36" r="1.1" opacity="0.12"/><circle cx="1566" cy="550" r="1.0" opacity="0.07"/><circle cx="1576" cy="608" r="0.8" opacity="0.02"/><circle cx="548" cy="31" r="1.1" opacity="0.09"/><circle cx="1458" cy="0" r="1.0" opacity="0.22"/><circle cx="264" cy="62" r="1.6" opacity="0.23"/><circle cx="997" cy="191" r="1.0" opacity="0.23"/><circle cx="49" cy="1" r="1.0" opacity="0.34"/><circle cx="1462" cy="51" r="1.0" opacity="0.08"/><circle cx="1024" cy="86" r="0.9" opacity="0.26"/><circle cx="48" cy="402" r="1.0" opacity="0.06"/><circle cx="1591" cy="182" r="0.9" opacity="0.16"/><circle cx="659" cy="100" r="0.8" opacity="0.14"/><circle cx="1458" cy="9" r="0.7" opacity="0.08"/><circle cx="107" cy="7" r="0.9" opacity="0.09"/><circle cx="36" cy="184" r="1.3" opacity="0.19"/><circle cx="189" cy="94" r="1.1" opacity="0.16"/><circle cx="1089" cy="79" r="0.9" opacity="0.08"/><circle cx="1118" cy="178" r="1.3" opacity="0.16"/><circle cx="44" cy="302" r="1.6" opacity="0.09"/><circle cx="805" cy="47" r="1.1" opacity="0.19"/><circle cx="782" cy="7" r="1.6" opacity="0.18"/><circle cx="538" cy="31" r="1.1" opacity="0.12"/><circle cx="78" cy="258" r="1.0" opacity="0.20"/><circle cx="8" cy="0" r="2.1" opacity="0.22"/><circle cx="1556" cy="5" r="1.6" opacity="0.21"/><circle cx="878" cy="49" r="1.6" opacity="0.30"/><circle cx="1192" cy="211" r="2.1" opacity="0.16"/><circle cx="1219" cy="180" r="0.7" opacity="0.19"/><circle cx="1219" cy="192" r="1.3" opacity="0.22"/><circle cx="139" cy="2" r="0.7" opacity="0.31"/><circle cx="1083" cy="221" r="1.0" opacity="0.09"/><circle cx="131" cy="230" r="0.8" opacity="0.10"/><circle cx="1535" cy="132" r="1.6" opacity="0.28"/><circle cx="804" cy="85" r="1.1" opacity="0.13"/><circle cx="1015" cy="174" r="1.1" opacity="0.16"/><circle cx="914" cy="17" r="1.0" opacity="0.16"/><circle cx="1521" cy="222" r="0.7" opacity="0.22"/><circle cx="326" cy="3" r="1.6" opacity="0.09"/><circle cx="560" cy="43" r="0.9" opacity="0.26"/><circle cx="725" cy="90" r="0.8" opacity="0.16"/><circle cx="1377" cy="139" r="2.1" opacity="0.08"/><circle cx="1600" cy="22" r="1.0" opacity="0.11"/><circle cx="46" cy="120" r="1.6" opacity="0.18"/><circle cx="1391" cy="21" r="1.3" opacity="0.30"/><circle cx="320" cy="8" r="1.0" opacity="0.27"/><circle cx="445" cy="82" r="1.0" opacity="0.24"/><circle cx="1449" cy="119" r="0.8" opacity="0.24"/><circle cx="1572" cy="116" r="1.0" opacity="0.16"/><circle cx="730" cy="50" r="1.6" opacity="0.32"/><circle cx="499" cy="4" r="0.8" opacity="0.09"/><circle cx="1413" cy="64" r="1.0" opacity="0.28"/><circle cx="1176" cy="137" r="1.0" opacity="0.19"/><circle cx="890" cy="15" r="2.1" opacity="0.28"/><circle cx="780" cy="4" r="1.6" opacity="0.31"/><circle cx="1219" cy="117" r="0.7" opacity="0.25"/><circle cx="52" cy="248" r="2.1" opacity="0.06"/><circle cx="1028" cy="173" r="2.1" opacity="0.09"/><circle cx="1276" cy="213" r="0.8" opacity="0.11"/><circle cx="605" cy="2" r="0.9" opacity="0.29"/><circle cx="1275" cy="57" r="1.0" opacity="0.25"/><circle cx="1200" cy="217" r="2.1" opacity="0.10"/><circle cx="1289" cy="152" r="1.6" opacity="0.07"/><circle cx="633" cy="2" r="0.7" opacity="0.27"/><circle cx="4" cy="572" r="1.0" opacity="0.04"/><circle cx="188" cy="49" r="0.8" opacity="0.25"/><circle cx="1183" cy="198" r="2.1" opacity="0.21"/><circle cx="92" cy="160" r="0.9" opacity="0.19"/><circle cx="569" cy="4" r="0.9" opacity="0.30"/><circle cx="1231" cy="163" r="2.1" opacity="0.23"/><circle cx="1198" cy="13" r="0.9" opacity="0.30"/><circle cx="1179" cy="151" r="1.1" opacity="0.24"/></g>
</svg>
<svg width="0" height="0" style="position:absolute"><defs>
<linearGradient id="m_sky" x1="0" y1="0" x2="1" y2="0"><stop offset="0" stop-color="#cfcbdc"/><stop offset="0.25" stop-color="#ebe4e2"/><stop offset="0.6" stop-color="#f3e9df"/><stop offset="1" stop-color="#ecd8d0"/></linearGradient>
<linearGradient id="m_far" x1="0" y1="0" x2="0" y2="1"><stop offset="0" stop-color="#8c86aa"/><stop offset="0.5" stop-color="#7e7090"/><stop offset="1" stop-color="#76627c"/></linearGradient>
<linearGradient id="m_hz" x1="0" y1="0" x2="0" y2="1"><stop offset="0" stop-color="#c4b8cc"/><stop offset="1" stop-color="#a99bb8"/></linearGradient>
<linearGradient id="m_r1" x1="0" y1="0" x2="1" y2="0"><stop offset="0" stop-color="#a692ae"/><stop offset="0.5" stop-color="#a2829c"/><stop offset="1" stop-color="#c48e8c"/></linearGradient>
<linearGradient id="m_r2" x1="0" y1="0" x2="1" y2="0"><stop offset="0" stop-color="#5c4862"/><stop offset="0.45" stop-color="#74526a"/><stop offset="0.8" stop-color="#9c6464"/><stop offset="1" stop-color="#b27258"/></linearGradient>
<linearGradient id="m_lake" x1="0" y1="0" x2="1" y2="0.25"><stop offset="0" stop-color="#aaa6cc"/><stop offset="0.55" stop-color="#aca0c4"/><stop offset="1" stop-color="#b89cb4"/></linearGradient>
<linearGradient id="m_left" x1="0" y1="0" x2="1" y2="1"><stop offset="0" stop-color="#8a6c80"/><stop offset="0.6" stop-color="#906a72"/><stop offset="1" stop-color="#7a6278"/></linearGradient>
<linearGradient id="m_ridge" x1="0" y1="0" x2="0" y2="1"><stop offset="0" stop-color="#7c6068"/><stop offset="0.2" stop-color="#8a6450"/><stop offset="0.45" stop-color="#94623a"/><stop offset="0.75" stop-color="#7e5228"/><stop offset="1" stop-color="#5e3c20"/></linearGradient>
<radialGradient id="m_flare" cx="0.5" cy="0.5" r="0.5"><stop offset="0" stop-color="#f0b070" stop-opacity="0.42"/><stop offset="0.8" stop-color="#e8a060" stop-opacity="0.34"/><stop offset="1" stop-color="#e8a058" stop-opacity="0"/></radialGradient>
<radialGradient id="m_glow" cx="1.02" cy="0.2" r="0.42"><stop offset="0" stop-color="#f0a078" stop-opacity="0.28"/><stop offset="1" stop-color="#f0a070" stop-opacity="0"/></radialGradient>
<filter id="m_b1" x="-10%" y="-10%" width="120%" height="120%"><feGaussianBlur stdDeviation="1"/></filter>
<filter id="m_b2" x="-10%" y="-10%" width="120%" height="120%"><feGaussianBlur stdDeviation="2"/></filter>
<filter id="m_b3" x="-10%" y="-10%" width="120%" height="120%"><feGaussianBlur stdDeviation="3.5"/></filter>
<filter id="m_b8" x="-30%" y="-30%" width="160%" height="160%"><feGaussianBlur stdDeviation="8"/></filter>
<filter id="m_rough2" x="-5%" y="-5%" width="110%" height="110%"><feTurbulence type="fractalNoise" baseFrequency="0.12" numOctaves="2" seed="9"/><feDisplacementMap in="SourceGraphic" scale="9"/><feGaussianBlur stdDeviation="0.8"/></filter>
<filter id="m_rough" x="-5%" y="-5%" width="110%" height="110%"><feTurbulence type="fractalNoise" baseFrequency="0.08" numOctaves="2" seed="2"/><feDisplacementMap in="SourceGraphic" scale="5"/></filter>
<!-- noise layers: output coloured noise with thresholded alpha -->
<filter id="m_nsnow" color-interpolation-filters="sRGB" x="0" y="0" width="100%" height="100%"><feTurbulence type="fractalNoise" baseFrequency="0.075 0.11" numOctaves="4" seed="8"/><feColorMatrix type="matrix" values="0 0 0 0 0.85  0 0 0 0 0.81  0 0 0 0 0.89  3.4 0 0 0 -1.38"/></filter>
<filter id="m_ngrass" color-interpolation-filters="sRGB" x="0" y="0" width="100%" height="100%"><feTurbulence type="fractalNoise" baseFrequency="0.04 0.09" numOctaves="4" seed="21"/><feColorMatrix type="matrix" values="0 0 0 0 0.74  0 0 0 0 0.47  0 0 0 0 0.18  0 3.0 0 0 -1.4"/></filter>
<filter id="m_ndark" color-interpolation-filters="sRGB" x="0" y="0" width="100%" height="100%"><feTurbulence type="fractalNoise" baseFrequency="0.05 0.08" numOctaves="4" seed="33"/><feColorMatrix type="matrix" values="0 0 0 0 0.20  0 0 0 0 0.12  0 0 0 0 0.09  0 0 3.2 0 -1.45"/></filter>
<filter id="m_nfine" color-interpolation-filters="sRGB" x="0" y="0" width="100%" height="100%"><feTurbulence type="fractalNoise" baseFrequency="0.22 0.3" numOctaves="2" seed="5"/><feColorMatrix type="matrix" values="0 0 0 0 0.1  0 0 0 0 0.06  0 0 0 0 0.04  2.2 0 0 0 -0.95"/></filter>
<clipPath id="m_rc"><path d="M168,44 L176,46 L188,51 L200,57 L214,63 L228,70 L246,81 L262,92 L278,103 L294,115 L312,128 L330,143 L346,158 L360,156 L378,160 L400,172 L430,190 L460,204 L490,216 L490,339 L0,339 L0,108 L20,100 L42,92 L64,84 L82,77 L90,74 L100,75 L114,73 L126,66 L138,58 L150,50 L160,45Z"/></clipPath>
<mask id="m_msnow" maskUnits="userSpaceOnUse" x="0" y="0" width="490" height="339"><rect width="490" height="339" fill="#000"/><g filter="url(#m_b8)">
<path d="M166,40 L200,54 L250,84 L300,120 L336,150 L310,176 L250,168 L200,146 L150,124 L100,112 L110,80 L140,58Z" fill="#fff"/>
<path d="M170,46 L240,80 L320,140 L280,150 L210,110 L175,70Z" fill="#fff"/>
<path d="M0,150 L60,110 L110,95 L90,130 L40,170 L0,200Z" fill="#aaa"/>
<path d="M190,100 L250,130 L300,170 L260,180 L200,150Z" fill="#fff"/>
</g></mask>
<mask id="m_mgrass" maskUnits="userSpaceOnUse" x="0" y="0" width="490" height="339"><rect width="490" height="339" fill="#000"/><g filter="url(#m_b8)">
<path d="M90,120 L170,100 L215,130 L230,200 L200,260 L0,300 L0,220 L50,160Z" fill="#fff"/>
<path d="M225,85 L270,105 L330,150 L380,165 L490,220 L490,260 L420,230 L340,190 L280,160 L240,130Z" fill="#fff"/>
</g></mask>
<mask id="m_mdark" maskUnits="userSpaceOnUse" x="0" y="0" width="490" height="339"><rect width="490" height="339" fill="#000"/><g filter="url(#m_b8)">
<path d="M0,110 L90,76 L150,52 L168,46 L150,80 L110,110 L40,160 L0,200Z" fill="#ddd"/>
<path d="M0,230 L120,200 L220,230 L230,339 L0,339Z" fill="#fff"/>
<path d="M210,170 L300,170 L350,200 L300,215 L220,215Z" fill="#ccc"/>
</g></mask>
<symbol id="mountain" viewBox="0 0 490 339" preserveAspectRatio="none">
<rect width="490" height="339" fill="url(#m_sky)"/>
<!-- distant haze layers center -->
<path d="M160,16 L200,14 L250,16 L290,13 L330,15 L340,60 L160,60Z" fill="url(#m_hz)" filter="url(#m_b1)"/>
<path d="M185,28 L230,23 L290,25 L330,29 L330,70 L185,70Z" fill="#a596b6" filter="url(#m_b1)"/>
<!-- right upper range -->
<path d="M262,30 L280,20 L296,14 L330,10 L352,13 L372,11 L392,12 L410,15 L432,15 L462,18 L490,22 L490,70 L262,70Z" fill="url(#m_r1)" filter="url(#m_b1)"/>
<!-- far-left range -->
<g filter="url(#m_rough)"><path d="M-5,13 L8,9 L14,8 L22,10 L30,11 L38,13 L50,15 L60,16 L74,14 L86,15 L98,16 L114,15 L132,14 L148,15 L164,18 L180,25 L198,32 L216,40 L226,46 L200,64 L-5,84Z" fill="url(#m_far)"/></g>
<path d="M2,13 L12,9 L22,11 L34,12 L48,15 L62,17 L40,17 L18,15Z" fill="#c4c2dc" opacity="0.7" filter="url(#m_b1)"/>
<g filter="url(#m_b3)" opacity="0.5"><path d="M20,14 L44,40 L70,62 L50,62 L24,38Z" fill="#625878"/><path d="M80,17 L104,40 L130,58 L110,60 L86,40Z" fill="#625878"/><path d="M140,17 L168,36 L196,50 L170,52 L146,36Z" fill="#665a7a"/><path d="M50,17 L76,40 L100,60 L84,60 L58,40Z" fill="#9a92b8"/><path d="M112,17 L138,38 L160,50 L146,52 L118,36Z" fill="#968eb4"/></g>
<!-- clouds -->
<path d="M192,42 Q212,34 240,36 L268,37 L300,38 L262,44 L236,44 L212,47Z" fill="#eae4ec" filter="url(#m_b1)"/>
<path d="M318,37 Q345,33 374,38 L340,41Z" fill="#e6dee6" filter="url(#m_b1)"/>
<!-- lake (right) -->
<path d="M205,56 L240,47 L300,50 L490,95 L490,164 L330,164 L246,86Z" fill="url(#m_lake)"/>
<ellipse cx="400" cy="126" rx="70" ry="20" fill="#c4b8d6" opacity="0.5" filter="url(#m_b8)"/>
<!-- left lower slope (pinkish brown) -->
<g filter="url(#m_b2)"><path d="M-5,34 L20,46 L44,57 L66,65 L92,69 L116,69 L104,78 L60,88 L-5,94Z" fill="url(#m_left)"/></g>
<!-- left lake -->
<path d="M-2,95 L22,91 L46,88 L64,84 L58,89 L36,97 L14,103 L-2,108Z" fill="#a8a8cc" filter="url(#m_b1)"/>
<path d="M112,67 L134,60 L142,58 L136,63 L120,70Z" fill="#aaa6c8" filter="url(#m_b1)"/>
<!-- right lower range -->
<g filter="url(#m_b1)"><path d="M232,64 L246,54 L262,46 L284,40 L302,35 L322,38 L345,42 L372,40 L400,39 L440,44 L490,50 L490,108 L455,100 L420,94 L380,86 L340,79 L300,75 L262,72Z" fill="url(#m_r2)"/></g>
<path d="M300,40 L345,46 L400,44 L450,50 L490,56 L490,70 L400,60 L330,56Z" fill="#8a6478" opacity="0.5" filter="url(#m_b3)"/>
<!-- small peninsula -->
<path d="M186,52 L210,54 L232,57 L216,61 L196,61Z" fill="#70607c" filter="url(#m_b1)"/>
<!-- distant hills bottom right behind ridge -->
<g filter="url(#m_b1)"><path d="M338,144 L352,141 L368,146 L390,150 L420,156 L452,160 L474,152 L490,150 L490,220 L400,200 L340,170Z" fill="#7c6258"/>
<path d="M338,144 L352,141 L368,146 L390,150 L420,156 L452,160 L474,152 L490,150 L490,166 L420,170 L350,156Z" fill="#5a4650" opacity="0.75"/></g>
<!-- main ridge -->
<g clip-path="url(#m_rc)">
<rect width="490" height="339" fill="url(#m_ridge)"/>
<!-- dark left face -->
<path d="M0,108 L42,92 L90,74 L114,73 L150,50 L166,45 L150,70 L120,100 L70,140 L0,190Z" fill="#5e444a" opacity="0.6" filter="url(#m_b3)"/>
<rect width="490" height="339" filter="url(#m_ndark)" mask="url(#m_mdark)"/>
<path d="M0,200 L60,190 L140,200 L210,230 L215,339 L0,339Z" fill="#4a2c14" opacity="0.55" filter="url(#m_b8)"/>
<!-- dirt path -->
<g filter="url(#m_b3)">
<path d="M205,150 L260,150 L330,175 L400,215 L440,250 L420,300 L300,300 L215,260 L195,200Z" fill="#96684e"/>
<path d="M215,178 L262,166 L300,186 L262,200 L222,206Z" fill="#4e3424" opacity="0.7"/>
<path d="M282,182 L330,180 L350,196 L300,200Z" fill="#5a3c2a" opacity="0.55"/>
<path d="M230,215 L330,205 L400,235 L400,262 L240,264Z" fill="#a67658" opacity="0.55"/>
</g>
<rect width="490" height="339" filter="url(#m_ngrass)" mask="url(#m_mgrass)"/>
<rect width="490" height="339" filter="url(#m_nsnow)" mask="url(#m_msnow)"/>
<rect width="490" height="339" filter="url(#m_nfine)" opacity="0.14"/>
<path d="M150,52 L166,45 L172,52 L168,62 L156,64 L146,60Z" fill="#4a3a40" opacity="0.7" filter="url(#m_b2)"/>
<g filter="url(#m_rough2)"><path d="M170,48 L180,52 L200,63 L226,88 L258,126 L290,160 L270,164 L240,142 L214,114 L192,86 L176,66 L166,56Z" fill="#d6cee0" opacity="0.8"/></g>
<!-- definite snow patches -->
<g filter="url(#m_rough2)" fill="#d8d0e2">
<path d="M166,50 L173,48 L184,56 L196,67 L204,78 L198,80 L187,71 L176,62 L168,56Z" opacity="0.9"/>
<path d="M124,86 L142,80 L160,78 L172,82 L164,88 L150,87 L134,91 L124,93Z" opacity="0.8"/>
<path d="M204,118 L214,110 L228,122 L246,138 L266,152 L280,160 L262,158 L238,148 L216,138 L204,128Z" opacity="0.9"/>
<path d="M0,162 L14,150 L22,146 L16,158 L8,170 L0,182Z" opacity="0.85"/>
<path d="M322,190 L340,186 L352,196 L340,204 L326,200Z" fill="#e4dcea"/>
<path d="M200,196 L216,188 L220,194 L206,202Z" fill="#d8d4f0"/>
<path d="M208,226 L216,220 L218,224 L211,230Z" fill="#d8d4f0"/>
</g>
<!-- bright grass tufts -->
<g filter="url(#m_b3)" fill="#c88a3a" opacity="0.7">
<path d="M120,150 L160,132 L190,140 L196,160 L160,170 L130,168Z"/>
<path d="M70,236 L110,224 L140,232 L130,250 L80,252Z"/>
<path d="M340,168 L370,162 L400,180 L372,186Z"/>
<path d="M150,188 L196,180 L206,196 L170,206Z" fill="#c08838"/>
</g>
</g>
<!-- bottom-right snow field -->
<g filter="url(#m_rough2)"><path d="M400,236 L414,230 L432,236 L452,244 L472,256 L496,270 L496,345 L424,345 L416,312 L406,282 L408,256Z" fill="#eee2ea"/></g>
<g filter="url(#m_rough2)"><path d="M402,236 L412,250 L412,262 L406,276 L418,296 L414,312 L428,345 L414,345 L406,312 L400,278 L400,250Z" fill="#8678ba" opacity="0.9"/></g>
<path d="M438,236 L490,262 L490,272 L470,258 L446,246Z" fill="#70503a" opacity="0.8" filter="url(#m_b1)"/>
<!-- warm glow + flare -->
<rect width="490" height="339" fill="url(#m_glow)"/>
<circle cx="470" cy="60" r="30" fill="url(#m_flare)"/>
</symbol>
<filter id="t_b" x="-10%" y="-10%" width="120%" height="120%"><feGaussianBlur stdDeviation="0.7"/></filter>
<filter id="t_b1" x="-10%" y="-10%" width="120%" height="120%"><feGaussianBlur stdDeviation="1.2"/></filter>
<filter id="t_b2" x="-20%" y="-20%" width="140%" height="140%"><feGaussianBlur stdDeviation="2.2"/></filter>
<filter id="t_b4" x="-20%" y="-20%" width="140%" height="140%"><feGaussianBlur stdDeviation="4"/></filter>
<filter id="t_rough" x="-5%" y="-5%" width="110%" height="110%"><feTurbulence type="fractalNoise" baseFrequency="0.09" numOctaves="2" seed="5"/><feDisplacementMap in="SourceGraphic" scale="7"/><feGaussianBlur stdDeviation="0.6"/></filter>
<filter id="t_paint" color-interpolation-filters="sRGB" x="0" y="0" width="100%" height="100%"><feTurbulence type="fractalNoise" baseFrequency="0.06 0.1" numOctaves="3" seed="12"/><feColorMatrix type="matrix" values="0 0 0 0 0.92  0 0 0 0 0.88  0 0 0 0 0.80  2.6 0 0 0 -1.2"/></filter>
<filter id="t_paint2" color-interpolation-filters="sRGB" x="0" y="0" width="100%" height="100%"><feTurbulence type="fractalNoise" baseFrequency="0.07 0.09" numOctaves="3" seed="30"/><feColorMatrix type="matrix" values="0 0 0 0 0.05  0 0 0 0 0.22  0 0 0 0 0.28  0 2.6 0 0 -1.25"/></filter>
<filter id="t_stone" color-interpolation-filters="sRGB" x="0" y="0" width="100%" height="100%"><feTurbulence type="fractalNoise" baseFrequency="0.14 0.1" numOctaves="3" seed="7"/><feColorMatrix type="matrix" values="0 0 0 0 0.12  0 0 0 0 0.16  0 0 0 0 0.10  0 0 2.8 0 -1.25"/></filter>
<linearGradient id="g_grass" x1="0" y1="0" x2="0" y2="1"><stop offset="0" stop-color="#35902e"/><stop offset="0.5" stop-color="#2c8628"/><stop offset="0.66" stop-color="#3a9431"/><stop offset="0.85" stop-color="#3f9a36"/><stop offset="1" stop-color="#1f701e"/></linearGradient>
<symbol id="grass" viewBox="0 0 100 108" preserveAspectRatio="none">
<rect width="100" height="108" fill="url(#g_grass)"/>
<g filter="url(#t_b2)"><path d="M0,26 L100,58 L100,64 L0,34Z" fill="#1e701f" opacity="0.5"/><path d="M0,4 L100,30 L100,36 L0,12Z" fill="#46a43a" opacity="0.45"/><path d="M0,44 L100,72 L100,75 L0,49Z" fill="#48a63c" opacity="0.35"/></g>
<rect x="0" y="66" width="100" height="34" fill="#4aa23c" opacity="0.25" filter="url(#t_b2)"/>
</symbol>
<filter id="t_gn" color-interpolation-filters="sRGB" x="0" y="0" width="100%" height="100%"><feTurbulence type="fractalNoise" baseFrequency="0.35 0.18" numOctaves="2" seed="3"/><feColorMatrix type="matrix" values="0 0 0 0 0.16  0 0 0 0 0.52  0 0 0 0 0.12  0 1.8 0 0 -0.75"/></filter>
<symbol id="grass2" viewBox="0 0 100 34" preserveAspectRatio="none">
<rect width="100" height="34" fill="#0d560e"/><rect width="100" height="34" filter="url(#t_gn)"/><rect y="27" width="100" height="7" fill="#053206" opacity="0.55"/>
</symbol>
<symbol id="fort" viewBox="0 0 100 43" preserveAspectRatio="none">
<rect width="100" height="43" fill="#1e3222"/>
<g filter="url(#t_b1)">
<rect x="0" y="0" width="100" height="7" fill="#2a3a22"/>
<path d="M20,43 V12 Q50,2 80,12 V43Z" fill="#9c987a"/>
<path d="M27,9 h46 v6 h-46z" fill="#1c1e14"/>
<path d="M24,16 h52 v5 h-52z" fill="#c8c4a8"/>
<path d="M0,8 h18 v35 h-18z" fill="#1a3222"/><path d="M82,8 h18 v35 h-18z" fill="#14281c"/>
<path d="M8,20 q6,-6 10,4 v19 h-10z" fill="#4a5a3a"/><path d="M84,22 q5,-6 9,3 v18 h-9z" fill="#3c4c34"/>
<path d="M37,43 v-12 q13,-16 26,0 v12z" fill="#12221a"/>
<path d="M47.4,43 v-8 l-8,-6 1,-1.4 8,4.4 h3.2 l8,-4.400 1,1.4 -8,6 v8z" fill="#e6e6de"/><circle cx="50" cy="30" r="1.7" fill="#d8c8b0"/>
</g>
<rect width="100" height="43" filter="url(#t_stone)" opacity="0.8"/>
</symbol>
<symbol id="fort2" viewBox="0 0 48 67" preserveAspectRatio="none">
<rect width="48" height="67" fill="#39472c"/>
<g filter="url(#t_b)">
<rect x="0" y="0" width="48" height="8" fill="#1e3020"/>
<path d="M3,24 Q24,-2 45,24Z" fill="#6a6440"/><path d="M9,24 Q24,6 39,24Z" fill="#4a4a2c"/>
<rect x="0" y="23" width="48" height="44" fill="#b4ae8c"/><rect x="0" y="21.500" width="48" height="3.5" fill="#d4d0b4"/>
<g fill="#22281e"><rect x="3.500" y="26.500" width="3" height="6.5" rx="1.4"/><rect x="9.500" y="26.500" width="3" height="6.5" rx="1.4"/><rect x="15.500" y="26.500" width="3" height="6.5" rx="1.4"/><rect x="21.500" y="26.500" width="3" height="6.5" rx="1.4"/><rect x="27.500" y="26.500" width="3" height="6.5" rx="1.4"/><rect x="33.500" y="26.500" width="3" height="6.5" rx="1.4"/><rect x="39.500" y="26.500" width="3" height="6.5" rx="1.4"/></g>
<rect x="0" y="34" width="48" height="3" fill="#d8d4bc"/>
<path d="M12,67 V48 Q24,32 36,48 V67Z" fill="#13261c"/>
<path d="M0,44 h7 v23 h-7z" fill="#55583c"/><path d="M41,46 h7 v21 h-7z" fill="#6a6a4c"/>
<path d="M21.400,67 V55 l-6.400,-7 1.500,-1.200 6,5.200 h3 l6,-5.200 1.500,1.200 -6.400,7 V67Z" fill="#ecece6"/><circle cx="24" cy="50.500" r="1.900" fill="#c8b8a0"/>
</g>
<rect width="48" height="67" filter="url(#t_stone)" opacity="0.7"/>
</symbol>
<radialGradient id="g_yoga" cx="0.5" cy="0.32" r="0.8"><stop offset="0" stop-color="#ffbe3a"/><stop offset="0.22" stop-color="#f39c18"/><stop offset="0.55" stop-color="#d47c0c"/><stop offset="1" stop-color="#a65a08"/></radialGradient>
<radialGradient id="g_sun" cx="0.5" cy="0.5" r="0.5"><stop offset="0" stop-color="#ffffff"/><stop offset="0.5" stop-color="#fff8d0"/><stop offset="1" stop-color="#ffd060" stop-opacity="0"/></radialGradient>
<symbol id="yoga" viewBox="0 0 100 87" preserveAspectRatio="none">
<rect width="100" height="87" fill="url(#g_yoga)"/>
<circle cx="50" cy="27" r="11.500" fill="url(#g_sun)"/>
<rect x="0" y="60" width="100" height="10" fill="#e8900e" opacity="0.55" filter="url(#t_b1)"/>
<ellipse cx="55" cy="61" rx="6" ry="1.3" fill="#ffe080" filter="url(#t_b)"/>
<path d="M0,72 Q50,66 100,71 V87 H0Z" fill="#231004"/>
<g fill="none" stroke="#26120a" stroke-linecap="round" filter="url(#t_b)">
<path d="M27,58 Q36,44 50,42.500 Q64,44 73,58" stroke-width="3"/>
<path d="M13,76 L19,64 Q22,58 29,58" stroke-width="6"/>
<path d="M87,76 L81,64 Q78,58 71,58" stroke-width="6"/>
<path d="M19,66 L28,70 M81,66 L72,70" stroke-width="3.400"/>
</g>
<g fill="#26120a" filter="url(#t_b)"><circle cx="31" cy="60.500" r="3.200"/><circle cx="69" cy="60.500" r="3.200"/>
<path d="M0,68 q10,-2 20,5 l0,2 h-20z"/><path d="M100,69 q-8,-1 -14,4 v2 h14z"/></g>
</symbol>
<symbol id="shoes" viewBox="-20 -6 140 95" preserveAspectRatio="none">
<rect x="-20" y="-6" width="140" height="95" fill="#237f90"/>
<g filter="url(#t_b2)">
<path d="M-20,-6 h62 l-6,16 -20,14 -24,10 -12,4z" fill="#dbb682"/>
<path d="M-20,-6 h34 l-8,14 -26,12z" fill="#e3a350"/>
<path d="M6,4 l14,-4 4,8 -12,6z" fill="#ecd0c8"/>
<path d="M-6,20 l12,-4 2,8 -10,4z" fill="#e8c4c0"/>
<path d="M42,-6 h78 v34 l-24,-10 -22,-6 -30,0z" fill="#a9bcbc"/>
<path d="M78,-6 h42 v24 l-20,-8z" fill="#d6cfbc"/>
<path d="M-20,38 l12,-4 24,-10 20,-14 6,30 -12,49 h-50z" fill="#1b7285"/>
<path d="M-20,60 l34,-8 14,37 h-48z" fill="#d69240"/>
<path d="M12,72 l18,-8 10,25 h-24z" fill="#c67a2e"/>
<path d="M74,66 l46,-24 v47 h-56z" fill="#2b8395"/>
<path d="M82,26 l28,10 10,22 -30,-8z" fill="#c2cac6" opacity="0.75"/>
<path d="M92,62 l28,-12 v30z" fill="#cec2a8" opacity="0.85"/>
<path d="M40,70 l16,4 -4,15 h-14z" fill="#1f6f80"/>
</g>
<rect x="-20" y="-6" width="140" height="95" filter="url(#t_paint)" opacity="0.5"/>
<rect x="-20" y="-6" width="140" height="95" filter="url(#t_paint2)" opacity="0.55"/>
<g filter="url(#t_b)">
<path d="M16,38 q-1,-18 8,-26 q9,-6 15,5 q5,12 5,28 q0,18 -6,28 q-7,9 -15,3 q-7,-8 -7,-22 q-1,-8 0,-16z" fill="#b65a26"/>
<path d="M18,32 q2,-14 9,-18 q8,-3 12,7 l2,12 q-12,-7 -23,-1z" fill="#cf7634"/>
<path d="M21,22 q4,-6 10,-6 q4,1 6,6 q-8,-3 -16,0z" fill="#e8a060" opacity="0.8"/>
<path d="M19,47 q10,-10 22,-2 q2,13 -3,25 q-8,7 -15,-2 q-4,-10 -4,-21z" fill="#46200e"/>
<path d="M23,53 l6,-3.400 3.400,5 -6,3.400z" fill="#f2eeea"/>
<path d="M27,60 q5,-3 9,0 q1,6 -3,9 q-5,0 -6,-9z" fill="#8a4018"/>
<path d="M50,36 q-1,-18 7,-25 q9,-6 15,4 q5,12 5,28 q0,18 -6,27 q-7,9 -14,3 q-7,-8 -7,-21 q-1,-8 0,-16z" fill="#ba5e28"/>
<path d="M52,45 q10,-9 23,-1 q1,12 -4,23 q-8,6 -14,-2 q-4,-9 -5,-20z" fill="#54280f"/>
<path d="M59,55 q5,-4 9,0 q1,6 -4,9 q-5,-1 -5,-9z" fill="#9c4a1c"/>
<path d="M54,17 q8,-8 18,0 q3,8 -2,14 q-9,4 -15,-3 q-3,-5 -1,-11z" fill="#1f9fe4"/>
<path d="M57,18 q6,-5 12,0 q1,3 -1,5 q-6,-3 -11,0z" fill="#68c4f4" opacity="0.8"/>
</g>
</symbol>
<linearGradient id="g_purple" x1="0" y1="0" x2="0" y2="1"><stop offset="0" stop-color="#3f1e6a"/><stop offset="0.28" stop-color="#6a2c76"/><stop offset="0.46" stop-color="#9a3c6c"/><stop offset="0.57" stop-color="#b04860"/><stop offset="0.62" stop-color="#7c3470"/><stop offset="0.78" stop-color="#5c2c7c"/><stop offset="1" stop-color="#44226e"/></linearGradient>
<radialGradient id="g_pglow" cx="0.5" cy="0.5" r="0.5"><stop offset="0" stop-color="#ff8a30"/><stop offset="0.5" stop-color="#f06438" stop-opacity="0.8"/><stop offset="1" stop-color="#d04850" stop-opacity="0"/></radialGradient>
<symbol id="purple" viewBox="0 0 100 46" preserveAspectRatio="none">
<rect width="100" height="46" fill="url(#g_purple)"/>
<ellipse cx="51" cy="26" rx="30" ry="7" fill="url(#g_pglow)"/>
<rect x="0" y="27.200" width="100" height="1.500" fill="#2c1244" opacity="0.75"/>
<ellipse cx="51" cy="32" rx="10" ry="2.500" fill="#e0604a" opacity="0.5" filter="url(#t_b)"/>
<path d="M50.300,20.500 h1.800 v2 l1.100,3.200 -0.700,0.300 -0.900,-2.100 v6.600 h-0.900 v-6.600 l-0.900,2.100 -0.700,-0.300 1.100,-3.200z" fill="#1c0a32"/><circle cx="51.200" cy="19.800" r="1" fill="#1c0a32"/>
</symbol>
<linearGradient id="g_shirt" x1="0" y1="0" x2="0" y2="1"><stop offset="0" stop-color="#c4efe6"/><stop offset="0.6" stop-color="#aee6e0"/><stop offset="1" stop-color="#6ec4c8"/></linearGradient>
<symbol id="woman" viewBox="0 0 59 67" preserveAspectRatio="none">
<rect width="59" height="67" fill="#2b2420"/>
<g filter="url(#t_b)">
<path d="M22,0 h22 q1,5 -3,9 l-16,0 q-4,-4 -3,-9z" fill="#d9ab90"/>
<path d="M36,0 h8 q0,6 -4,8z" fill="#a87860" opacity="0.7"/>
<path d="M4,67 V24 q0,-10 11,-13 l9,-3 h16 q9,2 11,11 l3,16 -8,4 -2,-7 q-3,16 -4,35z" fill="url(#g_shirt)"/>
<path d="M4,67 V30 q6,16 4,37z" fill="#8ed2d0" opacity="0.8"/>
<path d="M46,34 l8,-4 3,12 -4,25 h-7 q2,-18 0,-33z" fill="#5a4034"/>
<path d="M48,36 l5,-2.500 2,8 -3,14 -3,0z" fill="#9a7460" opacity="0.8"/>
</g>
</symbol>
<linearGradient id="g_shirt2" x1="0" y1="0" x2="0" y2="1"><stop offset="0" stop-color="#d4f2ec"/><stop offset="0.55" stop-color="#b4e8e4"/><stop offset="1" stop-color="#52bcd0"/></linearGradient>
<symbol id="woman2" viewBox="0 0 33 67" preserveAspectRatio="none">
<rect width="33" height="67" fill="#1c1a1a"/>
<g filter="url(#t_b)">
<path d="M7,8 q5,-8 13,-4 q6,4 5,13 q-1,9 -7,11 q-8,0 -11,-8 q-2,-7 0,-12z" fill="#241612"/>
<path d="M14,13 q6,-4 10,1 q2,6 0,12 q-4,4 -8,0 q-3,-6 -2,-13z" fill="#e2b8a0"/>
<path d="M16,14 q4,-2 7,0 l-1,3 q-3,-1 -6,1z" fill="#5a3a30" opacity="0.7"/>
<path d="M23,22 q4,-2 5,2 l-1,9 -4,-1z" fill="#d9aa90"/>
<path d="M14,26 l6,1 0,5 -6,0z" fill="#d0a088"/>
<path d="M1,67 V40 q1,-9 11,-10 l7,2 q7,2 9,9 l1,9 -5,2 q-2,7 -1,15z" fill="url(#g_shirt2)"/>
<path d="M23,52 l6,-2 -1,17 h-5z" fill="#c89c84"/>
</g>
</symbol>
<linearGradient id="ms_sky" x1="0" y1="0" x2="1" y2="0"><stop offset="0" stop-color="#c6cbe6"/><stop offset="0.45" stop-color="#f4f0f2"/><stop offset="0.8" stop-color="#fbeee6"/><stop offset="1" stop-color="#f2cfc0"/></linearGradient>
<radialGradient id="ms_glare" cx="0.5" cy="0.5" r="0.5"><stop offset="0" stop-color="#fff4ec" stop-opacity="0.95"/><stop offset="0.5" stop-color="#f8d0b8" stop-opacity="0.6"/><stop offset="1" stop-color="#f0b090" stop-opacity="0"/></radialGradient>
<symbol id="mtn_s" viewBox="0 -16 100 65" preserveAspectRatio="none">
<rect x="0" y="-16" width="100" height="65" fill="url(#ms_sky)"/>
<g filter="url(#t_b)">
<path d="M0,3 L8,1.500 L16,3 L24,4.500 L32,7 L40,10 L40,22 L0,24Z" fill="#786c98"/>
<path d="M0,10 L12,13 L22,14 L30,12 L30,24 L0,26Z" fill="#6e5878"/>
<path d="M42,5 L58,3.500 L76,4.500 L100,7 L100,18 L42,14Z" fill="#c09aa4"/>
<path d="M48,9 L64,6.500 L84,8 L100,11 L100,20 L56,15Z" fill="#a87474"/>
<path d="M34,9 L48,10 L70,13.500 L100,18 L100,30 L62,22 L44,14Z" fill="#bcb2d2"/>
<path d="M70,14 L100,18.500 L100,29 L78,24Z" fill="#e4ccd0" opacity="0.8"/>
<path d="M28,7 L31,6.500 L38,10 L46,14.500 L62,21.500 L80,27.500 L100,32.500 L100,49 L0,49 L0,20 L8,17 L16,13.500 L24,9.500Z" fill="#ac7436"/>
<path d="M0,20 L8,17 L16,13.500 L24,9.500 L29,7 L27,18 L24,30 L22,49 L0,49Z" fill="#6a4c3a"/>

<path d="M30,20 L42,18 L52,24 L44,28 L32,27Z" fill="#c48a40"/>
<path d="M28.500,7.500 L32,7.500 L37,12 L41,17 L37,18 L33,13 L29,10.500Z" fill="#e8e0ea"/>
<path d="M42,21 L47,22 L50,26 L45,26Z" fill="#e8dfe8"/>
<path d="M55,33 L63,35 L70,42 L77,49 L60,49 L58,40Z" fill="#f1e9ee"/>
<path d="M62,29 L80,33 L100,38.500 L100,49 L78,49 L70,40Z" fill="#b87c38"/>
<path d="M14,36 L22,34 L24,38 L16,40Z" fill="#d8ccd0" opacity="0.7"/>
</g>
<ellipse cx="34" cy="46" rx="24" ry="10" fill="#3e2a26" opacity="0.7" filter="url(#t_b2)"/><ellipse cx="8" cy="40" rx="12" ry="12" fill="#3e2a26" opacity="0.5" filter="url(#t_b2)"/><rect x="0" y="7" width="100" height="42" filter="url(#t_stone)" opacity="0.2"/>
<circle cx="90" cy="3" r="22" fill="url(#ms_glare)"/>
</symbol>
</defs></svg>
<div id="ps" style="position:absolute;left:129px;top:104px;width:828px;height:608px;background:#535353;overflow:hidden;font-family:'Liberation Sans',sans-serif;font-size:11px;letter-spacing:-0.15px">
<div style="position:absolute;left:0.0px;top:0.0px;width:828.0px;height:24.0px;background:#ffffff"></div>
<div style="position:absolute;left:6.6px;top:5.0px;height:14px;line-height:14px;font-size:11.3px;color:#111;white-space:nowrap;transform:scaleX(0.802);transform-origin:left center;letter-spacing:0;">Save for Web (100%)</div>
<div style="position:absolute;left:824.4px;top:24.0px;width:3.6px;height:584.0px;background:#5c5c5c"></div>
<div style="position:absolute;left:35.0px;top:50.4px;width:793.0px;height:1.0px;background:#4c4c4c"></div>
<div style="position:absolute;left:8.0px;top:29.5px;width:20.5px;height:18.0px;background:#3a3a3a;border-radius:1px"></div>
<div style="position:absolute;left:34.0px;top:26.0px;width:1.0px;height:582.0px;background:#4a4a4a"></div>
<svg style="position:absolute;left:0px;top:24px" width="34" height="150" viewBox="129 128 34 150">
<g stroke="#e8e8e8" stroke-linecap="round" fill="none" stroke-width="2.1"><path d="M145.3,144.2 L144.3,138.4 M147.7,143.6 L147.5,137.4 M150.1,143.9 L150.7,138 M152.2,145.2 L153.7,140.3 M144.8,147.2 L141.2,143.4"/></g><ellipse cx="148.3" cy="146.4" rx="4.3" ry="3.3" fill="#e8e8e8"/>
<g fill="#dedede"><path d="M138.6,157.6 l4.6,2.1 -4.6,2.1 1.300,-2.100 z"/><path d="M154.2,157.6 l-2,3.800 -1.500,-0.300 -5.400,5.600 -3.400,2.600 -0.900,-0.900 2.500,-3.500 5.500,-5.500 -0.400,-1.400 z"/></g>
<g fill="none" stroke="#dedede"><circle cx="145.2" cy="181.5" r="4.1" stroke-width="1.3"/><path d="M148.2,184.6 L153,189.6" stroke-width="2"/></g>
<g fill="#dedede"><path d="M153.2,199.6 q1.4,1.3 0.2,2.8 l-1.8,1.8 0.8,0.9 -1,1 -0.9,-0.9 -5.4,5.4 q-1.2,1.1 -2.3,1 l-1.3,0.9 -0.7,-0.7 0.9,-1.3 q-0.1,-1.2 1,-2.3 l5.4,-5.4 -0.9,-0.9 1,-1 0.9,0.8 1.8,-1.8 q1.2,-1.3 2.4,-0.3 z M148.7,204.8 l-5,5 q-0.6,0.7 -0.5,1.2 0.5,0.1 1.2,-0.5 l5,-5 z" fill-rule="evenodd"/></g>
</svg>
<div style="position:absolute;left:10.6px;top:122.6px;width:15.4px;height:15.4px;background:#000;box-shadow:0 0 0 1px #444"></div>
<div style="position:absolute;left:11.0px;top:148.2px;width:14.8px;height:10.6px;box-sizing:border-box;border:1.3px solid #cfcfcf;background:#5a5a5a"><div style="position:absolute;left:1.6px;top:1.5px;right:1.6px;bottom:1.5px;border:1px solid #c8c8c8;background:#7a7a7a"></div></div>
<svg style="position:absolute;left:36.0px;top:30.5px" width="16" height="16" viewBox="0 0 16 16"><circle cx="8" cy="8" r="6.3" fill="none" stroke="#e0e0e0" stroke-width="1.3"/><circle cx="8" cy="5" r="0.95" fill="#e0e0e0"/><rect x="7.2" y="6.9" width="1.6" height="4.6" fill="#e0e0e0"/></svg>
<div style="position:absolute;left:57.0px;top:31.8px;height:14px;line-height:14px;font-size:11px;color:#d4d4d4;white-space:nowrap;transform:scaleX(0.811);transform-origin:left center;letter-spacing:0;">Tip: Use File &gt; Export &gt; Export As...&nbsp; or right click on a layer for a faster way to export assets</div>
<div style="position:absolute;left:433.0px;top:29.5px;width:95.0px;height:18.5px;background:#454545;border-radius:2px;text-align:center;line-height:18.5px;color:#e4e4e4;font-size:11.5px"><span style="display:inline-block;transform:scaleX(0.823);transform-origin:center center;letter-spacing:0;white-space:nowrap">Learn More</span></div>
<div style="position:absolute;left:35.0px;top:52.5px;width:793.0px;height:1.0px;background:#4a4a4a"></div>
<div style="position:absolute;left:35.0px;top:54.6px;width:506.0px;height:23.4px;background:#434343"></div>
<div style="position:absolute;left:38.0px;top:55.5px;width:51.0px;height:21.5px;background:#4b4b4b"></div>
<div style="position:absolute;left:89.5px;top:55.5px;width:64.5px;height:22.0px;background:#535353"></div>
<div style="position:absolute;left:155.0px;top:55.5px;width:45.0px;height:21.5px;background:#4b4b4b"></div>
<div style="position:absolute;left:201.0px;top:55.5px;width:45.0px;height:21.5px;background:#4b4b4b"></div>
<div style="position:absolute;left:63.2px;width:200px;margin-left:-100px;text-align:center;top:60.0px;height:14px;line-height:14px;font-size:10.5px;color:#9a9a9a;white-space:nowrap;transform:scaleX(0.810);transform-origin:center center;letter-spacing:0;">Original</div>
<div style="position:absolute;left:121.5px;width:200px;margin-left:-100px;text-align:center;top:60.0px;height:14px;line-height:14px;font-size:10.5px;color:#e8e8e8;white-space:nowrap;transform:scaleX(0.793);transform-origin:center center;letter-spacing:0;">Optimized</div>
<div style="position:absolute;left:177.0px;width:200px;margin-left:-100px;text-align:center;top:60.0px;height:14px;line-height:14px;font-size:10.5px;color:#9a9a9a;white-space:nowrap;transform:scaleX(0.791);transform-origin:center center;letter-spacing:0;">2-Up</div>
<div style="position:absolute;left:222.9px;width:200px;margin-left:-100px;text-align:center;top:60.0px;height:14px;line-height:14px;font-size:10.5px;color:#9a9a9a;white-space:nowrap;transform:scaleX(0.826);transform-origin:center center;letter-spacing:0;">4-Up</div>
<div style="position:absolute;left:41.0px;top:82.0px;width:496.0px;height:466.5px;box-sizing:border-box;border:2px solid #787878;border-left-width:1.5px;background:#4c4c4c"></div>
<div style="position:absolute;left:44.0px;top:126.0px;width:490px;height:339px;overflow:hidden;background:#806050"><svg width="490" height="339" style="position:absolute;left:0;top:0"><use href="#mountain" width="490" height="339"/></svg></div>
<div style="position:absolute;left:43.0px;top:506.0px;width:492.0px;height:1.5px;background:#444444"></div>
<div style="position:absolute;right:297.7px;top:510.8px;height:14px;line-height:14px;font-size:9.8px;color:#d0d0d0;white-space:nowrap;transform:scaleX(0.830);transform-origin:right center;letter-spacing:0;">60 quality</div>
<div style="position:absolute;left:35.0px;top:556.0px;width:505.5px;height:22.0px;box-sizing:border-box;background:#515151;border:1px solid #5e5e5e"></div>
<div style="position:absolute;left:456.4px;top:560.0px;height:14px;line-height:14px;font-size:9.4px;color:#c0c0c0;white-space:nowrap;transform:scaleX(0.928);transform-origin:left center;letter-spacing:0;">Index: --</div>
<div style="position:absolute;left:538.6px;top:54.0px;width:4.6px;height:501.0px;background:#4a4a4a"></div>
<div style="position:absolute;left:546.5px;top:63.5px;width:273.0px;height:148.0px;box-sizing:border-box;border:1px solid #494949;box-shadow:inset 1px 1px 0 rgba(255,255,255,0.07),1px 1px 0 rgba(255,255,255,0.07);border-bottom:none;border-radius:1px"></div>
<div style="position:absolute;left:554.0px;top:56.0px;width:244.0px;height:16.0px;background:#535353"></div>
<div style="position:absolute;left:558.2px;top:57.0px;height:14px;line-height:14px;font-size:11px;color:#dcdcdc;white-space:nowrap;transform:scaleX(0.803);transform-origin:left center;letter-spacing:0;">Preset:</div>
<div style="position:absolute;left:598.0px;top:57.0px;width:117.0px;height:14.0px;background:#454545;border-radius:2px;box-shadow:inset 0 0 0 1px #4a4a4a"><div style="position:absolute;left:2.6px;top:0;height:14.0px;line-height:14.0px;font-size:11px;color:#dcdcdc;white-space:nowrap;transform:scaleX(0.781);transform-origin:left center;letter-spacing:0;">[Unnamed]</div><svg width="8" height="6" viewBox="0 0 8 6" style="position:absolute;right:3.5px;top:4.0px"><path d="M1,1.2 L4,4.4 L7,1.2" fill="none" stroke="#cfcfcf" stroke-width="1.2"/></svg></div>
<svg style="position:absolute;left:798.0px;top:59.8px" width="12.4" height="7.6" viewBox="0 0 14 9"><path d="M0.5,3 h3.4 l-1.7,2.4z" fill="#d0d0d0"/><g fill="#c4c4c4"><rect x="5" y="0.6" width="8" height="1.7"/><rect x="5" y="3.4" width="8" height="1.7"/><rect x="5" y="6.2" width="8" height="1.7"/></g></svg>
<div style="position:absolute;left:552.0px;top:84.0px;width:267.0px;height:127.0px;box-sizing:border-box;border:1px solid #494949;box-shadow:inset 1px 1px 0 rgba(255,255,255,0.07),1px 1px 0 rgba(255,255,255,0.07);border-radius:1px"></div>
<div style="position:absolute;left:560.0px;top:77.0px;width:126.0px;height:14.0px;background:#535353"></div>
<div style="position:absolute;left:564.3px;top:77.6px;width:118.4px;height:13.2px;background:#454545;border-radius:2px;box-shadow:inset 0 0 0 1px #4a4a4a"><div style="position:absolute;left:3.5px;top:0;height:13.2px;line-height:13.2px;font-size:11px;color:#dcdcdc;white-space:nowrap;transform:scaleX(0.672);transform-origin:left center;letter-spacing:0;">JPEG</div><svg width="8" height="6" viewBox="0 0 8 6" style="position:absolute;right:3.5px;top:3.6px"><path d="M1,1.2 L4,4.4 L7,1.2" fill="none" stroke="#cfcfcf" stroke-width="1.2"/></svg></div>
<div style="position:absolute;left:557.4px;top:97.0px;width:118.4px;height:14.4px;background:#454545;border-radius:2px;box-shadow:inset 0 0 0 1px #4a4a4a"><div style="position:absolute;left:2.2px;top:0;height:14.4px;line-height:14.4px;font-size:11px;color:#dcdcdc;white-space:nowrap;transform:scaleX(0.791);transform-origin:left center;letter-spacing:0;">High</div><svg width="8" height="6" viewBox="0 0 8 6" style="position:absolute;right:3.5px;top:4.2px"><path d="M1,1.2 L4,4.4 L7,1.2" fill="none" stroke="#cfcfcf" stroke-width="1.2"/></svg></div>
<div style="position:absolute;right:75.3px;top:97.2px;height:14px;line-height:14px;font-size:11px;color:#dcdcdc;white-space:nowrap;transform:scaleX(0.813);transform-origin:right center;letter-spacing:0;">Quality:</div>
<div style="position:absolute;left:759.0px;top:97.0px;width:39.0px;height:14.4px;background:#454545;border-radius:2px 0 0 2px"><div style="position:absolute;left:1.6px;top:0;line-height:14.4px;font-size:11px;color:#e0e0e0"><span style="display:inline-block;transform:scaleX(0.834);transform-origin:left center;letter-spacing:0;white-space:nowrap">60</span></div></div>
<div style="position:absolute;left:799.0px;top:97.0px;width:13.0px;height:14.4px;background:#454545;border-radius:0 2px 2px 0"><svg width="8" height="6" viewBox="0 0 8 6" style="position:absolute;left:2.5px;top:4.4px"><path d="M1,1.2 L4,4.4 L7,1.2" fill="none" stroke="#cfcfcf" stroke-width="1.2"/></svg></div>
<div style="position:absolute;left:557.4px;top:118.0px;width:10.0px;height:10.0px;background:#d8d8d8;border-radius:1.5px"><svg width="10" height="10" viewBox="0 0 10 10" style="position:absolute;left:0;top:0"><path d="M2,5.2 L4.2,7.4 L8.2,2.6" fill="none" stroke="#3a3a3a" stroke-width="1.8"/></svg></div>
<div style="position:absolute;left:572.0px;top:116.2px;height:14px;line-height:14px;font-size:11px;color:#dcdcdc;white-space:nowrap;transform:scaleX(0.775);transform-origin:left center;letter-spacing:0;">Progressive</div>
<div style="position:absolute;right:75.3px;top:116.2px;height:14px;line-height:14px;font-size:11px;color:#dcdcdc;white-space:nowrap;transform:scaleX(0.796);transform-origin:right center;letter-spacing:0;">Blur:</div>
<div style="position:absolute;left:759.0px;top:116.3px;width:39.0px;height:14.0px;background:#454545;border-radius:2px 0 0 2px"><div style="position:absolute;left:1.8px;top:0;line-height:14.0px;font-size:11px;color:#e0e0e0"><span style="display:inline-block;transform:scaleX(0.817);transform-origin:left center;letter-spacing:0;white-space:nowrap">0</span></div></div>
<div style="position:absolute;left:799.0px;top:116.3px;width:13.0px;height:14.0px;background:#454545;border-radius:0 2px 2px 0"></div>
<div style="position:absolute;left:557.4px;top:136.8px;width:10.0px;height:10.0px;box-sizing:border-box;border:1px solid #666;background:#525252;border-radius:1px"></div>
<div style="position:absolute;left:572.0px;top:135.0px;height:14px;line-height:14px;font-size:11px;color:#7a7a7a;white-space:nowrap;transform:scaleX(0.767);transform-origin:left center;letter-spacing:0;">Optimized</div>
<div style="position:absolute;right:75.3px;top:135.0px;height:14px;line-height:14px;font-size:11px;color:#dcdcdc;white-space:nowrap;transform:scaleX(0.837);transform-origin:right center;letter-spacing:0;">Matte:</div>
<div style="position:absolute;left:759.0px;top:135.3px;width:40.0px;height:13.2px;background:#ffffff"></div>
<div style="position:absolute;left:557.4px;top:154.5px;width:10.0px;height:10.0px;box-sizing:border-box;border:1px solid #8a8a8a;background:#4c4c4c;border-radius:1px"></div>
<div style="position:absolute;left:572.0px;top:152.6px;height:14px;line-height:14px;font-size:11px;color:#dcdcdc;white-space:nowrap;transform:scaleX(0.760);transform-origin:left center;letter-spacing:0;">Embed Color Profile</div>
<div style="position:absolute;left:556.6px;top:218.0px;width:10.0px;height:10.0px;background:#d8d8d8;border-radius:1.5px"><svg width="10" height="10" viewBox="0 0 10 10" style="position:absolute;left:0;top:0"><path d="M2,5.2 L4.2,7.4 L8.2,2.6" fill="none" stroke="#3a3a3a" stroke-width="1.8"/></svg></div>
<div style="position:absolute;left:571.0px;top:216.2px;height:14px;line-height:14px;font-size:11px;color:#dcdcdc;white-space:nowrap;transform:scaleX(0.779);transform-origin:left center;letter-spacing:0;">Convert to sRGB</div>
<div style="position:absolute;left:551.4px;top:234.2px;height:14px;line-height:14px;font-size:11px;color:#c8c8c8;white-space:nowrap;transform:scaleX(0.789);transform-origin:left center;letter-spacing:0;">Preview:</div>
<div style="position:absolute;left:591.4px;top:234.8px;width:230.0px;height:13.2px;background:#454545;border-radius:2px;box-shadow:inset 0 0 0 1px #4a4a4a"><div style="position:absolute;left:2.0px;top:0;height:13.2px;line-height:13.2px;font-size:11px;color:#dcdcdc;white-space:nowrap;transform:scaleX(0.782);transform-origin:left center;letter-spacing:0;">Monitor Color</div></div>
<div style="position:absolute;left:551.4px;top:253.8px;height:14px;line-height:14px;font-size:11px;color:#c8c8c8;white-space:nowrap;transform:scaleX(0.816);transform-origin:left center;letter-spacing:0;">Metadata:</div>
<div style="position:absolute;left:598.0px;top:254.4px;width:223.0px;height:13.0px;background:#454545;border-radius:2px;box-shadow:inset 0 0 0 1px #4a4a4a"><div style="position:absolute;left:1.8px;top:0;height:13.0px;line-height:13.0px;font-size:11px;color:#dcdcdc;white-space:nowrap;transform:scaleX(0.806);transform-origin:left center;letter-spacing:0;">None</div></div>
<div style="position:absolute;left:543.0px;top:272.5px;width:285.0px;height:1.0px;background:#484848"></div>
<div style="position:absolute;left:546.5px;top:282.5px;width:290.0px;height:180.0px;box-sizing:border-box;border:1px solid #494949;box-shadow:inset 1px 1px 0 rgba(255,255,255,0.07),1px 1px 0 rgba(255,255,255,0.07);border-radius:1px"></div>
<div style="position:absolute;left:554.0px;top:276.0px;width:56.0px;height:13.0px;background:#535353"></div>
<div style="position:absolute;left:558.5px;top:275.6px;height:14px;line-height:14px;font-size:11px;color:#dcdcdc;white-space:nowrap;transform:scaleX(0.779);transform-origin:left center;letter-spacing:0;">Color Table</div>
<div style="position:absolute;left:607.5px;top:288.3px;width:155.0px;height:155.0px;box-sizing:border-box;border:1px solid #5a5a5a;background:#4a4a4a"></div>
<svg style="position:absolute;left:637.0px;top:446.5px" width="130" height="14" viewBox="766 550.5 130 14"><g fill="none" stroke="#858585" stroke-width="1"><rect x="768.5" y="553" width="9" height="9"/><path d="M768.5,557.5h9M773,553v9" /><rect x="769.5" y="554" width="3" height="3" fill="#858585"/><rect x="773.5" y="558" width="3" height="3" fill="#858585"/><path d="M791.5,555.3 l4.5,-2.3 4.5,2.3 v4.6 l-4.5,2.4 -4.5,-2.4z M791.5,555.3 l4.5,2.3 4.5,-2.3 M796,557.6 v4.7"/><rect x="815.5" y="556.5" width="8" height="6"/><path d="M817.3,556.5 v-1.8 a2.2,2.2 0 0 1 4.4,0 v1.8"/><path d="M852.5,553.5 h7 v7 h-3 l-1.5,2 h-2.5z M856,560.5 v-3 h3.5"/><path d="M874,555 h8 M875,555 l0.6,7.5 h4.8 l0.6,-7.5 M876.5,555 v-1.5 h3 v1.5 M877,557v4 M879,557v4"/></g></svg>
<div style="position:absolute;left:546.5px;top:473.5px;width:290.0px;height:46.5px;box-sizing:border-box;border:1px solid #494949;box-shadow:inset 1px 1px 0 rgba(255,255,255,0.07),1px 1px 0 rgba(255,255,255,0.07);border-radius:1px"></div>
<div style="position:absolute;left:554.0px;top:467.0px;width:51.0px;height:13.0px;background:#535353"></div>
<div style="position:absolute;left:558.5px;top:466.6px;height:14px;line-height:14px;font-size:10.8px;color:#dcdcdc;white-space:nowrap;transform:scaleX(0.774);transform-origin:left center;letter-spacing:0;">Image Size</div>
<div style="position:absolute;left:551.2px;top:482.0px;height:14px;line-height:14px;font-size:10.5px;color:#c8c8c8;white-space:nowrap;transform:scaleX(0.886);transform-origin:left center;letter-spacing:0;">W:</div>
<div style="position:absolute;left:553.6px;top:500.6px;height:14px;line-height:14px;font-size:10.5px;color:#c8c8c8;white-space:nowrap;transform:scaleX(0.838);transform-origin:left center;letter-spacing:0;">H:</div>
<div style="position:absolute;left:567.8px;top:483.0px;width:62.4px;height:12.0px;background:#454545;border-radius:1.5px"><div style="position:absolute;left:2.0px;top:0;line-height:12.0px;font-size:10.5px;color:#e0e0e0"><span style="display:inline-block;transform:scaleX(0.816);transform-origin:left center;letter-spacing:0;white-space:nowrap">860</span></div></div>
<div style="position:absolute;left:567.8px;top:501.5px;width:62.4px;height:12.0px;background:#454545;border-radius:1.5px"><div style="position:absolute;left:2.0px;top:0;line-height:12.0px;font-size:10.5px;color:#e0e0e0"><span style="display:inline-block;transform:scaleX(0.816);transform-origin:left center;letter-spacing:0;white-space:nowrap">423</span></div></div>
<div style="position:absolute;left:633.0px;top:482.4px;height:14px;line-height:14px;font-size:10.5px;color:#c8c8c8;white-space:nowrap;transform:scaleX(0.902);transform-origin:left center;letter-spacing:0;">px</div>
<div style="position:absolute;left:633.0px;top:501.0px;height:14px;line-height:14px;font-size:10.5px;color:#c8c8c8;white-space:nowrap;transform:scaleX(0.902);transform-origin:left center;letter-spacing:0;">px</div>
<svg style="position:absolute;left:651.0px;top:487.0px" width="18" height="24" viewBox="780 591 18 24"><path d="M782.5,594.2 h4.3 v18.6 h-4.3" fill="none" stroke="#d8d8d8" stroke-width="1.3"/><g fill="none" stroke="#d8d8d8" stroke-width="1.1"><rect x="792.3" y="598.6" width="4.2" height="5" rx="2.1"/><rect x="792.3" y="602.6" width="4.2" height="5" rx="2.1"/></g></svg>
<div style="position:absolute;left:674.8px;top:482.0px;height:14px;line-height:14px;font-size:10.5px;color:#c8c8c8;white-space:nowrap;transform:scaleX(0.849);transform-origin:left center;letter-spacing:0;">Percent:</div>
<div style="position:absolute;left:674.8px;top:500.8px;height:14px;line-height:14px;font-size:10.5px;color:#c8c8c8;white-space:nowrap;transform:scaleX(0.862);transform-origin:left center;letter-spacing:0;">Quality:</div>
<div style="position:absolute;left:713.0px;top:483.0px;width:110.0px;height:12.0px;background:#454545;border-radius:1.5px"><div style="position:absolute;left:2.5px;top:0;line-height:12.0px;font-size:10.5px;color:#e0e0e0"><span style="display:inline-block;transform:scaleX(0.788);transform-origin:left center;letter-spacing:0;white-space:nowrap">100</span></div></div>
<div style="position:absolute;left:713.0px;top:501.5px;width:110.0px;height:12.0px;background:#454545;border-radius:1.5px"><div style="position:absolute;left:0.8px;top:0;line-height:12.0px;font-size:10.5px;color:#e0e0e0"><span style="display:inline-block;transform:scaleX(0.798);transform-origin:left center;letter-spacing:0;white-space:nowrap">Bicubic</span></div></div>
<div style="position:absolute;left:546.5px;top:530.0px;width:290.0px;height:46.0px;box-sizing:border-box;border:1px solid #494949;box-shadow:inset 1px 1px 0 rgba(255,255,255,0.07),1px 1px 0 rgba(255,255,255,0.07);border-radius:1px"></div>
<div style="position:absolute;left:554.0px;top:523.5px;width:47.0px;height:13.0px;background:#535353"></div>
<div style="position:absolute;left:558.5px;top:523.0px;height:14px;line-height:14px;font-size:10.8px;color:#dcdcdc;white-space:nowrap;transform:scaleX(0.791);transform-origin:left center;letter-spacing:0;">Animation</div>
<div style="position:absolute;left:551.0px;top:538.6px;height:14px;line-height:14px;font-size:10.5px;color:#777;white-space:nowrap;transform:scaleX(0.812);transform-origin:left center;letter-spacing:0;">Looping Options:</div>
<div style="position:absolute;left:623.0px;top:539.8px;width:200.0px;height:11.4px;background:#4d4d4d;border-radius:1.5px"><div style="position:absolute;left:1.8px;top:0;line-height:11.4px;font-size:10.5px;color:#777"><span style="display:inline-block;transform:scaleX(0.829);transform-origin:left center;letter-spacing:0;white-space:nowrap">Forever</span></div></div>
<div style="position:absolute;left:552.0px;top:558.5px;width:134.0px;height:13.5px;background:#505050;box-shadow:inset 0 0 0 1px #5a5a5a;text-align:center;line-height:13.5px;font-size:9.5px;color:#7c7c7c"><span style="display:inline-block;transform:scaleX(0.852);transform-origin:center center;letter-spacing:0;white-space:nowrap">1 of 1</span></div>
<div style="position:absolute;left:687.0px;top:558.5px;width:25.0px;height:13.5px;background:#484848"><svg width="25" height="13.5" viewBox="0 0 22 13" style="position:absolute;left:0;top:0"><g fill="#8a8a8a"><path d="M9,3.5v6l-4.5,-3z M14,3.5v6l-4.5,-3z"/></g></svg></div>
<div style="position:absolute;left:713.8px;top:558.5px;width:25.0px;height:13.5px;background:#484848"><svg width="25" height="13.5" viewBox="0 0 22 13" style="position:absolute;left:0;top:0"><g fill="#8a8a8a"><path d="M10,3.5v6l-4.5,-3z"/><rect x="11" y="3.5" width="1.3" height="6"/></g></svg></div>
<div style="position:absolute;left:740.5px;top:558.5px;width:25.0px;height:13.5px;background:#484848"><svg width="25" height="13.5" viewBox="0 0 22 13" style="position:absolute;left:0;top:0"><g fill="#8a8a8a"><path d="M8,3v7l6,-3.5z"/></g></svg></div>
<div style="position:absolute;left:767.0px;top:558.5px;width:25.0px;height:13.5px;background:#484848"><svg width="25" height="13.5" viewBox="0 0 22 13" style="position:absolute;left:0;top:0"><g fill="#8a8a8a"><rect x="7" y="3.5" width="1.3" height="6"/><path d="M9.3,3.5v6l4.5,-3z"/></g></svg></div>
<svg style="position:absolute;left:492.5px;top:585.5px" width="13" height="12" viewBox="0 0 13 12"><path d="M6.5,0.6 L12.5,11.2 H0.5 Z" fill="#f2c318" stroke="#caa20e" stroke-width="0.6"/><rect x="5.9" y="4" width="1.3" height="4" fill="#3a2c00"/><rect x="5.9" y="8.8" width="1.3" height="1.3" fill="#3a2c00"/></svg>
<div style="position:absolute;left:514.0px;top:581.8px;width:89.5px;height:21.0px;box-sizing:border-box;border:1.6px solid #c4c4c4;border-radius:11px;text-align:center;line-height:18.4px;font-size:11.5px;color:#eaeaea"><span style="display:inline-block;transform:scaleX(0.860);transform-origin:center center;letter-spacing:0;white-space:nowrap">Save...</span></div>
<div style="position:absolute;left:617.0px;top:581.8px;width:89.0px;height:21.0px;box-sizing:border-box;border:1.2px solid #6c6c6c;border-radius:11px;text-align:center;line-height:18.8px;font-size:11.5px;color:#e0e0e0"><span style="display:inline-block;transform:scaleX(0.804);transform-origin:center center;letter-spacing:0;white-space:nowrap">Cancel</span></div>
<div style="position:absolute;left:720.0px;top:581.8px;width:89.0px;height:21.0px;box-sizing:border-box;border:1.2px solid #6c6c6c;border-radius:11px;text-align:center;line-height:18.8px;font-size:11.5px;color:#e0e0e0"><span style="display:inline-block;transform:scaleX(0.847);transform-origin:center center;letter-spacing:0;white-space:nowrap">Done</span></div>
</div>
<div id="xn" style="position:absolute;left:911px;top:227.5px;width:646px;height:503.5px;border:1px solid #1a1a22;border-top-color:#4a4e60;background:#efefef;overflow:hidden;font-family:'Liberation Sans',sans-serif;font-size:9.8px;-webkit-text-stroke:0.22px currentColor">
<div style="position:absolute;left:0.0px;top:0.0px;width:646.0px;height:10.6px;background:linear-gradient(#5a5c64,#2e2e30 28%,#0a0a0a)"></div>
<div style="position:absolute;left:315.3px;width:160px;margin-left:-80px;text-align:center;top:-1.2px;height:10px;line-height:10px;font-size:8.8px;color:#f4f4f4;white-space:nowrap;letter-spacing:0;font-weight:bold"><span style="display:inline-block;transform:scaleX(0.989);transform-origin:center center;letter-spacing:0;white-space:nowrap">XnConvert</span></div>
<svg style="position:absolute;left:1.5px;top:2.2px" width="8" height="6" viewBox="0 0 8 6"><rect width="8" height="6" fill="#e8eef8"/><rect width="8" height="1.6" fill="#88a8e0"/><rect x="0.8" y="2.4" width="6.4" height="2.8" fill="#b8ccec"/></svg>
<svg style="position:absolute;left:620.0px;top:1.6px" width="26" height="8" viewBox="0 0 26 8"><g fill="none" stroke="#f0f0f0" stroke-width="1.2"><path d="M1.5,6.4 h3.6" stroke-width="1.5"/><rect x="10.2" y="1.6" width="3.8" height="4.6"/><path d="M19,1.6 l4.4,4.8 M23.4,1.6 l-4.4,4.8" stroke-width="1.4"/></g></svg>
<div style="position:absolute;left:8.0px;top:36.2px;width:631.5px;height:436.8px;box-sizing:border-box;border:1px solid #c6c6c6;background:linear-gradient(#ffffff,#f9f9f9 40%,#f7f7f7)"></div>
<div style="position:absolute;left:90.5px;top:19.9px;width:70.6px;height:16.8px;box-sizing:border-box;border:1px solid #c2c2c2;border-bottom:none;border-radius:2px 2px 0 0;background:linear-gradient(#f2f2f2,#e2e2e2);text-align:center;line-height:15.8px;color:#1a1a1a;font-size:9.8px"><span style="display:inline-block;transform:scaleX(1.016);transform-origin:center center;letter-spacing:0;white-space:nowrap">Actions [0/0]</span></div>
<div style="position:absolute;left:161.0px;top:19.9px;width:47.1px;height:16.8px;box-sizing:border-box;border:1px solid #c2c2c2;border-bottom:none;border-radius:2px 2px 0 0;background:linear-gradient(#f2f2f2,#e2e2e2);text-align:center;line-height:15.8px;color:#1a1a1a;font-size:9.8px"><span style="display:inline-block;transform:scaleX(1.020);transform-origin:center center;letter-spacing:0;white-space:nowrap">Output</span></div>
<div style="position:absolute;left:208.0px;top:19.9px;width:43.6px;height:16.8px;box-sizing:border-box;border:1px solid #c2c2c2;border-bottom:none;border-radius:2px 2px 0 0;background:linear-gradient(#f2f2f2,#e2e2e2);text-align:center;line-height:15.8px;color:#c4c4c4;font-size:9.8px"><span style="display:inline-block;transform:scaleX(0.972);transform-origin:center center;letter-spacing:0;white-space:nowrap">Status</span></div>
<div style="position:absolute;left:251.8px;top:19.9px;width:51.3px;height:16.8px;box-sizing:border-box;border:1px solid #c2c2c2;border-bottom:none;border-radius:2px 2px 0 0;background:linear-gradient(#f2f2f2,#e2e2e2);text-align:center;line-height:15.8px;color:#1a1a1a;font-size:9.8px"><span style="display:inline-block;transform:scaleX(1.003);transform-origin:center center;letter-spacing:0;white-space:nowrap">Settings</span></div>
<div style="position:absolute;left:303.0px;top:19.9px;width:41.9px;height:16.8px;box-sizing:border-box;border:1px solid #c2c2c2;border-bottom:none;border-radius:2px 2px 0 0;background:linear-gradient(#f2f2f2,#e2e2e2);text-align:center;line-height:15.8px;color:#1a1a1a;font-size:9.8px"><span style="display:inline-block;transform:scaleX(0.996);transform-origin:center center;letter-spacing:0;white-space:nowrap">About</span></div>
<div style="position:absolute;left:8.0px;top:18.0px;width:82.4px;height:19.4px;box-sizing:border-box;border:1px solid #c2c2c2;border-bottom:none;border-radius:2.5px 2.5px 0 0;background:#fdfdfd;text-align:center;line-height:17.2px;color:#1a1a1a;font-size:9.8px"><span style="display:inline-block;transform:scaleX(1.018);transform-origin:center center;letter-spacing:0;white-space:nowrap">Input: 32 file(s)</span></div>
<div style="position:absolute;left:21.8px;top:52.3px;height:12px;line-height:12px;font-size:9.8px;color:#1a1a1a;white-space:nowrap;letter-spacing:0;"><span style="display:inline-block;transform:scaleX(0.963);transform-origin:left center;letter-spacing:0;white-space:nowrap">View as:</span></div>
<div style="position:absolute;left:62.2px;top:53.3px;width:9.6px;height:9.6px;box-sizing:border-box;border:1px solid #9a9a9a;border-radius:50%;background:linear-gradient(#f4f4f4,#ffffff)"></div>
<div style="position:absolute;left:75.5px;top:52.3px;height:12px;line-height:12px;font-size:9.8px;color:#1a1a1a;white-space:nowrap;letter-spacing:0;"><span style="display:inline-block;transform:scaleX(1.005);transform-origin:left center;letter-spacing:0;white-space:nowrap">Small thumbnails</span></div>
<div style="position:absolute;left:158.2px;top:53.3px;width:9.6px;height:9.6px;box-sizing:border-box;border:1px solid #9a9a9a;border-radius:50%;background:linear-gradient(#f4f4f4,#ffffff)"><div style="position:absolute;left:2.5px;top:2.5px;width:3.6px;height:3.6px;border-radius:50%;background:#222"></div></div>
<div style="position:absolute;left:171.2px;top:52.3px;height:12px;line-height:12px;font-size:9.8px;color:#1a1a1a;white-space:nowrap;letter-spacing:0;"><span style="display:inline-block;transform:scaleX(0.983);transform-origin:left center;letter-spacing:0;white-space:nowrap">Thumbnails</span></div>
<div style="position:absolute;left:228.6px;top:53.3px;width:9.6px;height:9.6px;box-sizing:border-box;border:1px solid #9a9a9a;border-radius:50%;background:linear-gradient(#f4f4f4,#ffffff)"></div>
<div style="position:absolute;left:241.8px;top:52.3px;height:12px;line-height:12px;font-size:9.8px;color:#1a1a1a;white-space:nowrap;letter-spacing:0;"><span style="display:inline-block;transform:scaleX(1.011);transform-origin:left center;letter-spacing:0;white-space:nowrap">Big thumbnails</span></div>
<div style="position:absolute;left:314.4px;top:53.3px;width:9.6px;height:9.6px;box-sizing:border-box;border:1px solid #9a9a9a;border-radius:50%;background:linear-gradient(#f4f4f4,#ffffff)"></div>
<div style="position:absolute;left:327.6px;top:52.3px;height:12px;line-height:12px;font-size:9.8px;color:#1a1a1a;white-space:nowrap;letter-spacing:0;"><span style="display:inline-block;transform:scaleX(0.984);transform-origin:left center;letter-spacing:0;white-space:nowrap">List</span></div>
<div style="position:absolute;left:21.8px;top:69.8px;height:12px;line-height:12px;font-size:9.8px;color:#1a1a1a;white-space:nowrap;letter-spacing:0;"><span style="display:inline-block;transform:scaleX(0.997);transform-origin:left center;letter-spacing:0;white-space:nowrap">You can drag&amp;drop your files on the list below.</span></div>
<div style="position:absolute;left:28.0px;top:91.0px;width:590.5px;height:300.0px;box-sizing:border-box;border:1px solid #bdbdbd;background:#ffffff"></div>
<div style="position:absolute;left:29.0px;top:92.0px;width:579.5px;height:13.8px;background:linear-gradient(#ffffff,#f4f4f4 50%,#e6e6e6);border-bottom:1px solid #c4c4c4"></div>
<div style="position:absolute;left:94.3px;top:92.5px;width:1.0px;height:12.5px;background:#d2d2d2"></div>
<div style="position:absolute;left:160.5px;top:92.5px;width:1.0px;height:12.5px;background:#d2d2d2"></div>
<div style="position:absolute;left:226.8px;top:92.5px;width:1.0px;height:12.5px;background:#d2d2d2"></div>
<div style="position:absolute;left:293.0px;top:92.5px;width:1.0px;height:12.5px;background:#d2d2d2"></div>
<div style="position:absolute;left:359.3px;top:92.5px;width:1.0px;height:12.5px;background:#d2d2d2"></div>
<div style="position:absolute;left:426.0px;top:92.5px;width:1.0px;height:12.5px;background:#d2d2d2"></div>
<div style="position:absolute;left:492.5px;top:92.5px;width:1.0px;height:12.5px;background:#d2d2d2"></div>
<div style="position:absolute;left:559.3px;top:92.5px;width:1.0px;height:12.5px;background:#d2d2d2"></div>
<div style="position:absolute;left:30.2px;top:92.8px;height:12px;line-height:12px;font-size:9.8px;color:#1a1a1a;white-space:nowrap;letter-spacing:0;"><span style="display:inline-block;transform:scaleX(0.956);transform-origin:left center;letter-spacing:0;white-space:nowrap">Name</span></div>
<div style="position:absolute;left:162.4px;top:92.8px;height:12px;line-height:12px;font-size:9.8px;color:#1a1a1a;white-space:nowrap;letter-spacing:0;"><span style="display:inline-block;transform:scaleX(1.003);transform-origin:left center;letter-spacing:0;white-space:nowrap">Modified date</span></div>
<div style="position:absolute;left:228.6px;top:92.8px;height:12px;line-height:12px;font-size:9.8px;color:#1a1a1a;white-space:nowrap;letter-spacing:0;"><span style="display:inline-block;transform:scaleX(0.997);transform-origin:left center;letter-spacing:0;white-space:nowrap">Created date</span></div>
<div style="position:absolute;left:295.0px;top:92.8px;height:12px;line-height:12px;font-size:9.8px;color:#1a1a1a;white-space:nowrap;letter-spacing:0;"><span style="display:inline-block;transform:scaleX(0.939);transform-origin:left center;letter-spacing:0;white-space:nowrap">EXIF Date Take</span></div>
<div style="position:absolute;left:361.3px;top:92.8px;height:12px;line-height:12px;font-size:9.8px;color:#1a1a1a;white-space:nowrap;letter-spacing:0;"><span style="display:inline-block;transform:scaleX(0.974);transform-origin:left center;letter-spacing:0;white-space:nowrap">Properties</span></div>
<div style="position:absolute;left:427.6px;top:92.8px;height:12px;line-height:12px;font-size:9.8px;color:#1a1a1a;white-space:nowrap;letter-spacing:0;"><span style="display:inline-block;transform:scaleX(0.975);transform-origin:left center;letter-spacing:0;white-space:nowrap">Print size</span></div>
<div style="position:absolute;left:494.0px;top:92.8px;height:12px;line-height:12px;font-size:9.8px;color:#1a1a1a;white-space:nowrap;letter-spacing:0;"><span style="display:inline-block;transform:scaleX(0.932);transform-origin:left center;letter-spacing:0;white-space:nowrap">Type</span></div>
<div style="position:absolute;left:560.6px;top:92.8px;height:12px;line-height:12px;font-size:9.8px;color:#1a1a1a;white-space:nowrap;letter-spacing:0;"><span style="display:inline-block;transform:scaleX(1.001);transform-origin:left center;letter-spacing:0;white-space:nowrap">Comment</span></div>
<div style="position:absolute;right:486.0px;top:92.8px;height:12px;line-height:12px;font-size:9.8px;color:#1a1a1a;white-space:nowrap;letter-spacing:0;"><span style="display:inline-block;transform:scaleX(0.934);transform-origin:right center;letter-spacing:0;white-space:nowrap">Size</span></div>
<svg style="position:absolute;left:88.4px;top:96.0px" width="5" height="4" viewBox="0 0 5 4"><path d="M0,3.6 L2.5,0.3 L5,3.6Z" fill="#2a2a2a"/></svg>
<div style="position:absolute;left:29.0px;top:106.3px;width:571.5px;height:94.6px;background:#ebebeb"></div>
<div style="position:absolute;left:29.0px;top:187.9px;width:571.5px;height:13.0px;background:#efefcf"></div>
<div style="position:absolute;left:38.8px;top:113.5px;width:61.9px;height:66.6px;background:#fdfdfd;box-shadow:0 1px 2.5px rgba(0,0,0,0.45),0 0 1px rgba(0,0,0,0.4)"><svg width="58.7" height="63.4" viewBox="0 0 100 108" preserveAspectRatio="xMidYMid slice" style="position:absolute;left:1.6px;top:1.6px"><use href="#grass" x="0" y="0" width="100" height="108"/></svg></div>
<svg width="8.4" height="6.2" viewBox="0 0 8.4 6.2" style="position:absolute;left:93.9px;top:176.0px"><rect width="8.4" height="6.2" fill="#6a68a8"/><rect x="1" y="1.2" width="6.4" height="3.8" fill="#9a98cc"/><rect x="2.2" y="2" width="1.6" height="2.2" fill="#4a4888"/><rect x="4.6" y="2" width="1.6" height="2.2" fill="#4a4888"/></svg>
<div style="position:absolute;left:69.5px;width:160px;margin-left:-80px;text-align:center;top:188.5px;height:12px;line-height:12px;font-size:9.8px;color:#1a1a1a;white-space:nowrap;letter-spacing:0;"><span style="display:inline-block;transform:scaleX(1.011);transform-origin:center center;letter-spacing:0;white-space:nowrap">32.jpg</span></div>
<div style="position:absolute;left:110.0px;top:106.3px;width:1.0px;height:94.6px;background:#c9c9c9"></div>
<div style="position:absolute;left:117.3px;top:132.5px;width:67.4px;height:29.0px;background:#fdfdfd;box-shadow:0 1px 2.5px rgba(0,0,0,0.45),0 0 1px rgba(0,0,0,0.4)"><svg width="64.2" height="25.8" viewBox="0 0 100 43" preserveAspectRatio="xMidYMid slice" style="position:absolute;left:1.6px;top:1.6px"><use href="#fort" x="0" y="0" width="100" height="43"/></svg></div>
<svg width="8.4" height="6.2" viewBox="0 0 8.4 6.2" style="position:absolute;left:175.6px;top:176.0px"><rect width="8.4" height="6.2" fill="#6a68a8"/><rect x="1" y="1.2" width="6.4" height="3.8" fill="#9a98cc"/><rect x="2.2" y="2" width="1.6" height="2.2" fill="#4a4888"/><rect x="4.6" y="2" width="1.6" height="2.2" fill="#4a4888"/></svg>
<div style="position:absolute;left:151.2px;width:160px;margin-left:-80px;text-align:center;top:188.5px;height:12px;line-height:12px;font-size:9.8px;color:#1a1a1a;white-space:nowrap;letter-spacing:0;"><span style="display:inline-block;transform:scaleX(1.011);transform-origin:center center;letter-spacing:0;white-space:nowrap">31.jpg</span></div>
<div style="position:absolute;left:191.7px;top:106.3px;width:1.0px;height:94.6px;background:#c9c9c9"></div>
<div style="position:absolute;left:199.7px;top:130.1px;width:66.7px;height:33.8px;background:#fdfdfd;box-shadow:0 1px 2.5px rgba(0,0,0,0.45),0 0 1px rgba(0,0,0,0.4)"><svg width="63.5" height="30.6" viewBox="0 0 100 49" preserveAspectRatio="xMidYMid slice" style="position:absolute;left:1.6px;top:1.6px"><use href="#mtn_s" x="0" y="-16" width="100" height="65"/></svg></div>
<svg width="8.4" height="6.2" viewBox="0 0 8.4 6.2" style="position:absolute;left:257.3px;top:176.0px"><rect width="8.4" height="6.2" fill="#6a68a8"/><rect x="1" y="1.2" width="6.4" height="3.8" fill="#9a98cc"/><rect x="2.2" y="2" width="1.6" height="2.2" fill="#4a4888"/><rect x="4.6" y="2" width="1.6" height="2.2" fill="#4a4888"/></svg>
<div style="position:absolute;left:233.0px;width:160px;margin-left:-80px;text-align:center;top:188.5px;height:12px;line-height:12px;font-size:9.8px;color:#1a1a1a;white-space:nowrap;letter-spacing:0;"><span style="display:inline-block;transform:scaleX(1.011);transform-origin:center center;letter-spacing:0;white-space:nowrap">30.jpg</span></div>
<div style="position:absolute;left:273.4px;top:106.3px;width:1.0px;height:94.6px;background:#c9c9c9"></div>
<div style="position:absolute;left:280.4px;top:117.0px;width:68.1px;height:59.5px;background:#fdfdfd;box-shadow:0 1px 2.5px rgba(0,0,0,0.45),0 0 1px rgba(0,0,0,0.4)"><svg width="64.9" height="56.3" viewBox="0 0 100 87" preserveAspectRatio="xMidYMid slice" style="position:absolute;left:1.6px;top:1.6px"><use href="#yoga" x="0" y="0" width="100" height="87"/></svg></div>
<svg width="8.4" height="6.2" viewBox="0 0 8.4 6.2" style="position:absolute;left:339.0px;top:176.0px"><rect width="8.4" height="6.2" fill="#6a68a8"/><rect x="1" y="1.2" width="6.4" height="3.8" fill="#9a98cc"/><rect x="2.2" y="2" width="1.6" height="2.2" fill="#4a4888"/><rect x="4.6" y="2" width="1.6" height="2.2" fill="#4a4888"/></svg>
<div style="position:absolute;left:314.7px;width:160px;margin-left:-80px;text-align:center;top:188.5px;height:12px;line-height:12px;font-size:9.8px;color:#1a1a1a;white-space:nowrap;letter-spacing:0;"><span style="display:inline-block;transform:scaleX(1.011);transform-origin:center center;letter-spacing:0;white-space:nowrap">29.jpg</span></div>
<div style="position:absolute;left:355.1px;top:106.3px;width:1.0px;height:94.6px;background:#c9c9c9"></div>
<div style="position:absolute;left:366.8px;top:113.5px;width:58.2px;height:67.0px;background:#fdfdfd;box-shadow:0 1px 2.5px rgba(0,0,0,0.45),0 0 1px rgba(0,0,0,0.4)"><svg width="55.0" height="63.8" viewBox="-10 3 66 78" preserveAspectRatio="xMidYMid slice" style="position:absolute;left:1.6px;top:1.6px"><use href="#shoes" x="-20" y="-6" width="140" height="95"/></svg></div>
<svg width="8.4" height="6.2" viewBox="0 0 8.4 6.2" style="position:absolute;left:420.7px;top:176.0px"><rect width="8.4" height="6.2" fill="#6a68a8"/><rect x="1" y="1.2" width="6.4" height="3.8" fill="#9a98cc"/><rect x="2.2" y="2" width="1.6" height="2.2" fill="#4a4888"/><rect x="4.6" y="2" width="1.6" height="2.2" fill="#4a4888"/></svg>
<div style="position:absolute;left:396.3px;width:160px;margin-left:-80px;text-align:center;top:188.5px;height:12px;line-height:12px;font-size:9.8px;color:#1a1a1a;white-space:nowrap;letter-spacing:0;"><span style="display:inline-block;transform:scaleX(1.011);transform-origin:center center;letter-spacing:0;white-space:nowrap">28.jpg</span></div>
<div style="position:absolute;left:436.8px;top:106.3px;width:1.0px;height:94.6px;background:#c9c9c9"></div>
<div style="position:absolute;left:453.0px;top:113.5px;width:48.0px;height:67.0px;background:#fdfdfd;box-shadow:0 1px 2.5px rgba(0,0,0,0.45),0 0 1px rgba(0,0,0,0.4)"><svg width="44.8" height="63.8" viewBox="0 0 48 67" preserveAspectRatio="xMidYMid slice" style="position:absolute;left:1.6px;top:1.6px"><use href="#fort2" x="0" y="0" width="48" height="67"/></svg></div>
<svg width="8.4" height="6.2" viewBox="0 0 8.4 6.2" style="position:absolute;left:502.4px;top:176.0px"><rect width="8.4" height="6.2" fill="#6a68a8"/><rect x="1" y="1.2" width="6.4" height="3.8" fill="#9a98cc"/><rect x="2.2" y="2" width="1.6" height="2.2" fill="#4a4888"/><rect x="4.6" y="2" width="1.6" height="2.2" fill="#4a4888"/></svg>
<div style="position:absolute;left:478.0px;width:160px;margin-left:-80px;text-align:center;top:188.5px;height:12px;line-height:12px;font-size:9.8px;color:#1a1a1a;white-space:nowrap;letter-spacing:0;"><span style="display:inline-block;transform:scaleX(1.011);transform-origin:center center;letter-spacing:0;white-space:nowrap">27.jpg</span></div>
<div style="position:absolute;left:518.5px;top:106.3px;width:1.0px;height:94.6px;background:#c9c9c9"></div>
<div style="position:absolute;left:525.0px;top:118.2px;width:68.0px;height:56.3px;background:#fdfdfd;box-shadow:0 1px 2.5px rgba(0,0,0,0.45),0 0 1px rgba(0,0,0,0.4)"><svg width="64.8" height="53.1" viewBox="0 0 100 83" preserveAspectRatio="xMidYMid slice" style="position:absolute;left:1.6px;top:1.6px"><use href="#shoes" x="-20" y="-6" width="140" height="95"/></svg></div>
<svg width="8.4" height="6.2" viewBox="0 0 8.4 6.2" style="position:absolute;left:584.1px;top:176.0px"><rect width="8.4" height="6.2" fill="#6a68a8"/><rect x="1" y="1.2" width="6.4" height="3.8" fill="#9a98cc"/><rect x="2.2" y="2" width="1.6" height="2.2" fill="#4a4888"/><rect x="4.6" y="2" width="1.6" height="2.2" fill="#4a4888"/></svg>
<div style="position:absolute;left:559.8px;width:160px;margin-left:-80px;text-align:center;top:188.5px;height:12px;line-height:12px;font-size:9.8px;color:#1a1a1a;white-space:nowrap;letter-spacing:0;"><span style="display:inline-block;transform:scaleX(1.011);transform-origin:center center;letter-spacing:0;white-space:nowrap">26.jpg</span></div>
<div style="position:absolute;left:600.0px;top:106.3px;width:1.0px;height:94.6px;background:#c9c9c9"></div>
<div style="position:absolute;left:29.0px;top:200.3px;width:571.5px;height:1.0px;background:#c9c9c9"></div>
<div style="position:absolute;left:29.0px;top:200.9px;width:571.5px;height:94.6px;background:#ebebeb"></div>
<div style="position:absolute;left:29.0px;top:282.5px;width:571.5px;height:13.0px;background:#efefcf"></div>
<div style="position:absolute;left:36.0px;top:225.8px;width:67.0px;height:30.7px;background:#fdfdfd;box-shadow:0 1px 2.5px rgba(0,0,0,0.45),0 0 1px rgba(0,0,0,0.4)"><svg width="63.8" height="27.5" viewBox="0 0 100 46" preserveAspectRatio="xMidYMid slice" style="position:absolute;left:1.6px;top:1.6px"><use href="#purple" x="0" y="0" width="100" height="46"/></svg></div>
<svg width="8.4" height="6.2" viewBox="0 0 8.4 6.2" style="position:absolute;left:93.9px;top:270.6px"><rect width="8.4" height="6.2" fill="#6a68a8"/><rect x="1" y="1.2" width="6.4" height="3.8" fill="#9a98cc"/><rect x="2.2" y="2" width="1.6" height="2.2" fill="#4a4888"/><rect x="4.6" y="2" width="1.6" height="2.2" fill="#4a4888"/></svg>
<div style="position:absolute;left:69.5px;width:160px;margin-left:-80px;text-align:center;top:283.1px;height:12px;line-height:12px;font-size:9.8px;color:#1a1a1a;white-space:nowrap;letter-spacing:0;"><span style="display:inline-block;transform:scaleX(1.011);transform-origin:center center;letter-spacing:0;white-space:nowrap">25.jpg</span></div>
<div style="position:absolute;left:110.0px;top:200.9px;width:1.0px;height:94.6px;background:#c9c9c9"></div>
<div style="position:absolute;left:117.0px;top:233.2px;width:67.7px;height:17.8px;background:#fdfdfd;box-shadow:0 1px 2.5px rgba(0,0,0,0.45),0 0 1px rgba(0,0,0,0.4)"><svg width="64.5" height="14.6" viewBox="0 9 100 24" preserveAspectRatio="xMidYMid slice" style="position:absolute;left:1.6px;top:1.6px"><use href="#mtn_s" x="0" y="-16" width="100" height="65"/></svg></div>
<svg width="8.4" height="6.2" viewBox="0 0 8.4 6.2" style="position:absolute;left:175.6px;top:270.6px"><rect width="8.4" height="6.2" fill="#6a68a8"/><rect x="1" y="1.2" width="6.4" height="3.8" fill="#9a98cc"/><rect x="2.2" y="2" width="1.6" height="2.2" fill="#4a4888"/><rect x="4.6" y="2" width="1.6" height="2.2" fill="#4a4888"/></svg>
<div style="position:absolute;left:151.2px;width:160px;margin-left:-80px;text-align:center;top:283.1px;height:12px;line-height:12px;font-size:9.8px;color:#1a1a1a;white-space:nowrap;letter-spacing:0;"><span style="display:inline-block;transform:scaleX(1.011);transform-origin:center center;letter-spacing:0;white-space:nowrap">24.jpg</span></div>
<div style="position:absolute;left:191.7px;top:200.9px;width:1.0px;height:94.6px;background:#c9c9c9"></div>
<div style="position:absolute;left:199.7px;top:219.4px;width:67.2px;height:43.5px;background:#fdfdfd;box-shadow:0 1px 2.5px rgba(0,0,0,0.45),0 0 1px rgba(0,0,0,0.4)"><svg width="64.0" height="40.3" viewBox="4 -16 92 60" preserveAspectRatio="xMidYMid slice" style="position:absolute;left:1.6px;top:1.6px"><use href="#mtn_s" x="0" y="-16" width="100" height="65"/></svg></div>
<svg width="8.4" height="6.2" viewBox="0 0 8.4 6.2" style="position:absolute;left:257.3px;top:270.6px"><rect width="8.4" height="6.2" fill="#6a68a8"/><rect x="1" y="1.2" width="6.4" height="3.8" fill="#9a98cc"/><rect x="2.2" y="2" width="1.6" height="2.2" fill="#4a4888"/><rect x="4.6" y="2" width="1.6" height="2.2" fill="#4a4888"/></svg>
<div style="position:absolute;left:233.0px;width:160px;margin-left:-80px;text-align:center;top:283.1px;height:12px;line-height:12px;font-size:9.8px;color:#1a1a1a;white-space:nowrap;letter-spacing:0;"><span style="display:inline-block;transform:scaleX(1.011);transform-origin:center center;letter-spacing:0;white-space:nowrap">23.jpg</span></div>
<div style="position:absolute;left:273.4px;top:200.9px;width:1.0px;height:94.6px;background:#c9c9c9"></div>
<div style="position:absolute;left:280.0px;top:217.5px;width:68.0px;height:48.0px;background:#fdfdfd;box-shadow:0 1px 2.5px rgba(0,0,0,0.45),0 0 1px rgba(0,0,0,0.4)"><svg width="64.8" height="44.8" viewBox="0 7 100 69" preserveAspectRatio="xMidYMid slice" style="position:absolute;left:1.6px;top:1.6px"><use href="#shoes" x="-20" y="-6" width="140" height="95"/></svg></div>
<svg width="8.4" height="6.2" viewBox="0 0 8.4 6.2" style="position:absolute;left:339.0px;top:270.6px"><rect width="8.4" height="6.2" fill="#6a68a8"/><rect x="1" y="1.2" width="6.4" height="3.8" fill="#9a98cc"/><rect x="2.2" y="2" width="1.6" height="2.2" fill="#4a4888"/><rect x="4.6" y="2" width="1.6" height="2.2" fill="#4a4888"/></svg>
<div style="position:absolute;left:314.7px;width:160px;margin-left:-80px;text-align:center;top:283.1px;height:12px;line-height:12px;font-size:9.8px;color:#1a1a1a;white-space:nowrap;letter-spacing:0;"><span style="display:inline-block;transform:scaleX(1.011);transform-origin:center center;letter-spacing:0;white-space:nowrap">22.jpg</span></div>
<div style="position:absolute;left:355.1px;top:200.9px;width:1.0px;height:94.6px;background:#c9c9c9"></div>
<div style="position:absolute;left:378.0px;top:208.2px;width:35.7px;height:67.3px;background:#fdfdfd;box-shadow:0 1px 2.5px rgba(0,0,0,0.45),0 0 1px rgba(0,0,0,0.4)"><svg width="32.5" height="64.1" viewBox="12 6 38 74" preserveAspectRatio="xMidYMid slice" style="position:absolute;left:1.6px;top:1.6px"><use href="#shoes" x="-20" y="-6" width="140" height="95"/></svg></div>
<svg width="8.4" height="6.2" viewBox="0 0 8.4 6.2" style="position:absolute;left:420.7px;top:270.6px"><rect width="8.4" height="6.2" fill="#6a68a8"/><rect x="1" y="1.2" width="6.4" height="3.8" fill="#9a98cc"/><rect x="2.2" y="2" width="1.6" height="2.2" fill="#4a4888"/><rect x="4.6" y="2" width="1.6" height="2.2" fill="#4a4888"/></svg>
<div style="position:absolute;left:396.3px;width:160px;margin-left:-80px;text-align:center;top:283.1px;height:12px;line-height:12px;font-size:9.8px;color:#1a1a1a;white-space:nowrap;letter-spacing:0;"><span style="display:inline-block;transform:scaleX(1.011);transform-origin:center center;letter-spacing:0;white-space:nowrap">21.jpg</span></div>
<div style="position:absolute;left:436.8px;top:200.9px;width:1.0px;height:94.6px;background:#c9c9c9"></div>
<div style="position:absolute;left:443.7px;top:230.1px;width:67.3px;height:23.1px;background:#fdfdfd;box-shadow:0 1px 2.5px rgba(0,0,0,0.45),0 0 1px rgba(0,0,0,0.4)"><svg width="64.1" height="19.9" viewBox="0 9 100 31" preserveAspectRatio="xMidYMid slice" style="position:absolute;left:1.6px;top:1.6px"><use href="#purple" x="0" y="0" width="100" height="46"/></svg></div>
<svg width="8.4" height="6.2" viewBox="0 0 8.4 6.2" style="position:absolute;left:502.4px;top:270.6px"><rect width="8.4" height="6.2" fill="#6a68a8"/><rect x="1" y="1.2" width="6.4" height="3.8" fill="#9a98cc"/><rect x="2.2" y="2" width="1.6" height="2.2" fill="#4a4888"/><rect x="4.6" y="2" width="1.6" height="2.2" fill="#4a4888"/></svg>
<div style="position:absolute;left:478.0px;width:160px;margin-left:-80px;text-align:center;top:283.1px;height:12px;line-height:12px;font-size:9.8px;color:#1a1a1a;white-space:nowrap;letter-spacing:0;"><span style="display:inline-block;transform:scaleX(1.011);transform-origin:center center;letter-spacing:0;white-space:nowrap">20.jpg</span></div>
<div style="position:absolute;left:518.5px;top:200.9px;width:1.0px;height:94.6px;background:#c9c9c9"></div>
<div style="position:absolute;left:529.0px;top:208.2px;width:59.0px;height:67.3px;background:#fdfdfd;box-shadow:0 1px 2.5px rgba(0,0,0,0.45),0 0 1px rgba(0,0,0,0.4)"><svg width="55.8" height="64.1" viewBox="0 0 59 67" preserveAspectRatio="xMidYMid slice" style="position:absolute;left:1.6px;top:1.6px"><use href="#woman" x="0" y="0" width="59" height="67"/></svg></div>
<svg width="8.4" height="6.2" viewBox="0 0 8.4 6.2" style="position:absolute;left:584.1px;top:270.6px"><rect width="8.4" height="6.2" fill="#6a68a8"/><rect x="1" y="1.2" width="6.4" height="3.8" fill="#9a98cc"/><rect x="2.2" y="2" width="1.6" height="2.2" fill="#4a4888"/><rect x="4.6" y="2" width="1.6" height="2.2" fill="#4a4888"/></svg>
<div style="position:absolute;left:559.8px;width:160px;margin-left:-80px;text-align:center;top:283.1px;height:12px;line-height:12px;font-size:9.8px;color:#1a1a1a;white-space:nowrap;letter-spacing:0;"><span style="display:inline-block;transform:scaleX(1.011);transform-origin:center center;letter-spacing:0;white-space:nowrap">19.jpg</span></div>
<div style="position:absolute;left:600.0px;top:200.9px;width:1.0px;height:94.6px;background:#c9c9c9"></div>
<div style="position:absolute;left:29.0px;top:294.9px;width:571.5px;height:1.0px;background:#c9c9c9"></div>
<div style="position:absolute;left:29.0px;top:295.5px;width:571.5px;height:94.6px;background:#ebebeb"></div>
<div style="position:absolute;left:29.0px;top:377.1px;width:571.5px;height:13.0px;background:#efefcf"></div>
<div style="position:absolute;left:55.0px;top:303.0px;width:29.0px;height:67.3px;background:#fdfdfd;box-shadow:0 1px 2.5px rgba(0,0,0,0.45),0 0 1px rgba(0,0,0,0.4)"><svg width="25.8" height="64.1" viewBox="3 0 29 67" preserveAspectRatio="xMidYMid slice" style="position:absolute;left:1.6px;top:1.6px"><use href="#fort2" x="0" y="0" width="48" height="67"/></svg></div>
<svg width="8.4" height="6.2" viewBox="0 0 8.4 6.2" style="position:absolute;left:93.9px;top:365.2px"><rect width="8.4" height="6.2" fill="#6a68a8"/><rect x="1" y="1.2" width="6.4" height="3.8" fill="#9a98cc"/><rect x="2.2" y="2" width="1.6" height="2.2" fill="#4a4888"/><rect x="4.6" y="2" width="1.6" height="2.2" fill="#4a4888"/></svg>
<div style="position:absolute;left:69.5px;width:160px;margin-left:-80px;text-align:center;top:377.7px;height:12px;line-height:12px;font-size:9.8px;color:#1a1a1a;white-space:nowrap;letter-spacing:0;"><span style="display:inline-block;transform:scaleX(1.011);transform-origin:center center;letter-spacing:0;white-space:nowrap">18.jpg</span></div>
<div style="position:absolute;left:110.0px;top:295.5px;width:1.0px;height:94.6px;background:#c9c9c9"></div>
<div style="position:absolute;left:117.0px;top:324.9px;width:67.0px;height:22.6px;background:#fdfdfd;box-shadow:0 1px 2.5px rgba(0,0,0,0.45),0 0 1px rgba(0,0,0,0.4)"><svg width="63.8" height="19.4" viewBox="0 0 100 34" preserveAspectRatio="xMidYMid slice" style="position:absolute;left:1.6px;top:1.6px"><use href="#grass2" x="0" y="0" width="100" height="34"/></svg></div>
<svg width="8.4" height="6.2" viewBox="0 0 8.4 6.2" style="position:absolute;left:175.6px;top:365.2px"><rect width="8.4" height="6.2" fill="#6a68a8"/><rect x="1" y="1.2" width="6.4" height="3.8" fill="#9a98cc"/><rect x="2.2" y="2" width="1.6" height="2.2" fill="#4a4888"/><rect x="4.6" y="2" width="1.6" height="2.2" fill="#4a4888"/></svg>
<div style="position:absolute;left:151.2px;width:160px;margin-left:-80px;text-align:center;top:377.7px;height:12px;line-height:12px;font-size:9.8px;color:#1a1a1a;white-space:nowrap;letter-spacing:0;"><span style="display:inline-block;transform:scaleX(1.011);transform-origin:center center;letter-spacing:0;white-space:nowrap">17.jpg</span></div>
<div style="position:absolute;left:191.7px;top:295.5px;width:1.0px;height:94.6px;background:#c9c9c9"></div>
<div style="position:absolute;left:215.6px;top:303.0px;width:33.4px;height:67.3px;background:#fdfdfd;box-shadow:0 1px 2.5px rgba(0,0,0,0.45),0 0 1px rgba(0,0,0,0.4)"><svg width="30.2" height="64.1" viewBox="0 0 33 67" preserveAspectRatio="xMidYMid slice" style="position:absolute;left:1.6px;top:1.6px"><use href="#woman2" x="0" y="0" width="33" height="67"/></svg></div>
<svg width="8.4" height="6.2" viewBox="0 0 8.4 6.2" style="position:absolute;left:257.3px;top:365.2px"><rect width="8.4" height="6.2" fill="#6a68a8"/><rect x="1" y="1.2" width="6.4" height="3.8" fill="#9a98cc"/><rect x="2.2" y="2" width="1.6" height="2.2" fill="#4a4888"/><rect x="4.6" y="2" width="1.6" height="2.2" fill="#4a4888"/></svg>
<div style="position:absolute;left:233.0px;width:160px;margin-left:-80px;text-align:center;top:377.7px;height:12px;line-height:12px;font-size:9.8px;color:#1a1a1a;white-space:nowrap;letter-spacing:0;"><span style="display:inline-block;transform:scaleX(1.011);transform-origin:center center;letter-spacing:0;white-space:nowrap">16.jpg</span></div>
<div style="position:absolute;left:273.4px;top:295.5px;width:1.0px;height:94.6px;background:#c9c9c9"></div>
<div style="position:absolute;left:280.4px;top:327.5px;width:67.9px;height:18.6px;background:#fdfdfd;box-shadow:0 1px 2.5px rgba(0,0,0,0.45),0 0 1px rgba(0,0,0,0.4)"><svg width="64.7" height="15.4" viewBox="0 14 100 26" preserveAspectRatio="xMidYMid slice" style="position:absolute;left:1.6px;top:1.6px"><use href="#yoga" x="0" y="0" width="100" height="87"/></svg></div>
<svg width="8.4" height="6.2" viewBox="0 0 8.4 6.2" style="position:absolute;left:339.0px;top:365.2px"><rect width="8.4" height="6.2" fill="#6a68a8"/><rect x="1" y="1.2" width="6.4" height="3.8" fill="#9a98cc"/><rect x="2.2" y="2" width="1.6" height="2.2" fill="#4a4888"/><rect x="4.6" y="2" width="1.6" height="2.2" fill="#4a4888"/></svg>
<div style="position:absolute;left:314.7px;width:160px;margin-left:-80px;text-align:center;top:377.7px;height:12px;line-height:12px;font-size:9.8px;color:#1a1a1a;white-space:nowrap;letter-spacing:0;"><span style="display:inline-block;transform:scaleX(1.011);transform-origin:center center;letter-spacing:0;white-space:nowrap">15.jpg</span></div>
<div style="position:absolute;left:355.1px;top:295.5px;width:1.0px;height:94.6px;background:#c9c9c9"></div>
<div style="position:absolute;left:382.3px;top:302.5px;width:27.0px;height:68.4px;background:#fdfdfd;box-shadow:0 1px 2.5px rgba(0,0,0,0.45),0 0 1px rgba(0,0,0,0.4)"><svg width="23.8" height="65.2" viewBox="34 0 32 84" preserveAspectRatio="xMidYMid slice" style="position:absolute;left:1.6px;top:1.6px"><use href="#yoga" x="0" y="0" width="100" height="87"/></svg></div>
<svg width="8.4" height="6.2" viewBox="0 0 8.4 6.2" style="position:absolute;left:420.7px;top:365.2px"><rect width="8.4" height="6.2" fill="#6a68a8"/><rect x="1" y="1.2" width="6.4" height="3.8" fill="#9a98cc"/><rect x="2.2" y="2" width="1.6" height="2.2" fill="#4a4888"/><rect x="4.6" y="2" width="1.6" height="2.2" fill="#4a4888"/></svg>
<div style="position:absolute;left:396.3px;width:160px;margin-left:-80px;text-align:center;top:377.7px;height:12px;line-height:12px;font-size:9.8px;color:#1a1a1a;white-space:nowrap;letter-spacing:0;"><span style="display:inline-block;transform:scaleX(1.011);transform-origin:center center;letter-spacing:0;white-space:nowrap">14.jpg</span></div>
<div style="position:absolute;left:436.8px;top:295.5px;width:1.0px;height:94.6px;background:#c9c9c9"></div>
<div style="position:absolute;left:443.5px;top:320.2px;width:68.5px;height:33.3px;background:#fdfdfd;box-shadow:0 1px 2.5px rgba(0,0,0,0.45),0 0 1px rgba(0,0,0,0.4)"><svg width="65.3" height="30.1" viewBox="0 0 100 49" preserveAspectRatio="xMidYMid slice" style="position:absolute;left:1.6px;top:1.6px"><use href="#mtn_s" x="0" y="-16" width="100" height="65"/></svg></div>
<svg width="8.4" height="6.2" viewBox="0 0 8.4 6.2" style="position:absolute;left:502.4px;top:365.2px"><rect width="8.4" height="6.2" fill="#6a68a8"/><rect x="1" y="1.2" width="6.4" height="3.8" fill="#9a98cc"/><rect x="2.2" y="2" width="1.6" height="2.2" fill="#4a4888"/><rect x="4.6" y="2" width="1.6" height="2.2" fill="#4a4888"/></svg>
<div style="position:absolute;left:478.0px;width:160px;margin-left:-80px;text-align:center;top:377.7px;height:12px;line-height:12px;font-size:9.8px;color:#1a1a1a;white-space:nowrap;letter-spacing:0;"><span style="display:inline-block;transform:scaleX(1.011);transform-origin:center center;letter-spacing:0;white-space:nowrap">13.jpg</span></div>
<div style="position:absolute;left:518.5px;top:295.5px;width:1.0px;height:94.6px;background:#c9c9c9"></div>
<div style="position:absolute;left:525.6px;top:316.9px;width:67.4px;height:39.3px;background:#fdfdfd;box-shadow:0 1px 2.5px rgba(0,0,0,0.45),0 0 1px rgba(0,0,0,0.4)"><svg width="64.2" height="36.1" viewBox="0 14 100 56" preserveAspectRatio="xMidYMid slice" style="position:absolute;left:1.6px;top:1.6px"><use href="#shoes" x="-20" y="-6" width="140" height="95"/></svg></div>
<svg width="8.4" height="6.2" viewBox="0 0 8.4 6.2" style="position:absolute;left:584.1px;top:365.2px"><rect width="8.4" height="6.2" fill="#6a68a8"/><rect x="1" y="1.2" width="6.4" height="3.8" fill="#9a98cc"/><rect x="2.2" y="2" width="1.6" height="2.2" fill="#4a4888"/><rect x="4.6" y="2" width="1.6" height="2.2" fill="#4a4888"/></svg>
<div style="position:absolute;left:559.8px;width:160px;margin-left:-80px;text-align:center;top:377.7px;height:12px;line-height:12px;font-size:9.8px;color:#1a1a1a;white-space:nowrap;letter-spacing:0;"><span style="display:inline-block;transform:scaleX(1.011);transform-origin:center center;letter-spacing:0;white-space:nowrap">12.jpg</span></div>
<div style="position:absolute;left:600.0px;top:295.5px;width:1.0px;height:94.6px;background:#c9c9c9"></div>
<div style="position:absolute;left:29.0px;top:389.5px;width:571.5px;height:1.0px;background:#c9c9c9"></div>
<div style="position:absolute;left:608.5px;top:92.0px;width:9.0px;height:298.0px;background:#d6d6d6;border-left:1px solid #c4c4c4"></div>
<div style="position:absolute;left:609.5px;top:92.0px;width:8.0px;height:13.0px;background:linear-gradient(#fbfbfb,#ececec)"><svg width="8" height="13" viewBox="0 0 8 13"><path d="M1.6,7.6 L4,4.4 L6.4,7.6Z" fill="#2a2a2a"/></svg></div>
<div style="position:absolute;left:609.5px;top:378.0px;width:8.0px;height:12.0px;background:linear-gradient(#fbfbfb,#ececec)"><svg width="8" height="12" viewBox="0 0 8 12"><path d="M1.6,4.6 L4,7.8 L6.4,4.6Z" fill="#2a2a2a"/></svg></div>
<div style="position:absolute;left:609.5px;top:105.0px;width:8.0px;height:163.5px;box-sizing:border-box;background:linear-gradient(90deg,#fcfcfc,#ededed);border:1px solid #c2c2c2;border-left:none;border-right:none"></div>
<div style="position:absolute;left:22.0px;top:401.5px;width:64.5px;height:16.0px;box-sizing:border-box;border:1px solid #6f9fd6;border-radius:2.5px;background:linear-gradient(#fdfdfd,#ececec);box-shadow:0 0 0 1px rgba(255,255,255,0.6);background:linear-gradient(#fafcff,#e4ecf6)"><svg width="9" height="9" viewBox="0 0 9 9" style="position:absolute;left:3px;top:2.6px"><path d="M4.5,0.4 L8.6,4.5 L4.5,8.6 L0.4,4.5Z" fill="#5aa02c" stroke="#3c7a1a" stroke-width="0.7"/><path d="M4.5,1.6 L6.6,3.7 L2.4,3.7Z" fill="#a4d86c"/></svg><div style="position:absolute;left:13.8px;top:0;height:14.0px;line-height:14.0px;font-size:9.8px;color:#1a1a1a;letter-spacing:0;white-space:nowrap"><span style="display:inline-block;transform:scaleX(0.984);transform-origin:left center;letter-spacing:0;white-space:nowrap">Add files...</span></div></div>
<div style="position:absolute;left:90.5px;top:401.5px;width:57.5px;height:16.0px;box-sizing:border-box;border:1px solid #b4b4b4;border-radius:2.5px;background:linear-gradient(#fdfdfd,#ececec);box-shadow:0 0 0 1px rgba(255,255,255,0.6)"><div style="position:absolute;left:0;right:0;top:0;height:14.0px;line-height:14.0px;text-align:center;font-size:9.8px;color:#1a1a1a;letter-spacing:0;white-space:nowrap"><span style="display:inline-block;transform:scaleX(0.990);transform-origin:center center;letter-spacing:0;white-space:nowrap">Add folder...</span></div></div>
<div style="position:absolute;left:513.0px;top:401.5px;width:53.5px;height:16.0px;box-sizing:border-box;border:1px solid #d0d0d0;border-radius:2.5px;background:linear-gradient(#fdfdfd,#ececec);box-shadow:0 0 0 1px rgba(255,255,255,0.6)"><svg width="8" height="4" viewBox="0 0 8 4" style="position:absolute;left:4.5px;top:5px"><rect x="0.5" y="0.8" width="6.4" height="2.2" rx="0.8" fill="#c0c0c0"/></svg><div style="position:absolute;left:13.6px;top:0;height:14.0px;line-height:14.0px;font-size:9.8px;color:#b8b8b8;letter-spacing:0;white-space:nowrap"><span style="display:inline-block;transform:scaleX(0.954);transform-origin:left center;letter-spacing:0;white-space:nowrap">Remove</span></div></div>
<div style="position:absolute;left:570.5px;top:401.5px;width:54.0px;height:16.0px;box-sizing:border-box;border:1px solid #b4b4b4;border-radius:2.5px;background:linear-gradient(#fdfdfd,#ececec);box-shadow:0 0 0 1px rgba(255,255,255,0.6)"><div style="position:absolute;left:0;right:0;top:0;height:14.0px;line-height:14.0px;text-align:center;font-size:9.8px;color:#1a1a1a;letter-spacing:0;white-space:nowrap"><span style="display:inline-block;transform:scaleX(0.975);transform-origin:center center;letter-spacing:0;white-space:nowrap">Remove all</span></div></div>
<div style="position:absolute;left:239.0px;top:427.5px;width:224.5px;height:16.5px;box-sizing:border-box;border:1px solid #b8b8b8;border-radius:2px;background:#fff;box-shadow:inset 0 1px 1px rgba(0,0,0,0.08)"><div style="position:absolute;left:1.4px;top:0;line-height:14.5px;color:#9c9c9c;font-size:9.8px"><span style="display:inline-block;transform:scaleX(0.979);transform-origin:left center;letter-spacing:0;white-space:nowrap">Quick search</span></div></div>
<div style="position:absolute;left:467.0px;top:427.5px;width:74.4px;height:16.5px;box-sizing:border-box;border:1px solid #d0d0d0;border-radius:2.5px;background:linear-gradient(#fdfdfd,#ececec);box-shadow:0 0 0 1px rgba(255,255,255,0.6)"><div style="position:absolute;left:0;right:0;top:0;height:14.5px;line-height:14.5px;text-align:center;font-size:9.8px;color:#b8b8b8;letter-spacing:0;white-space:nowrap"><span style="display:inline-block;transform:scaleX(0.991);transform-origin:center center;letter-spacing:0;white-space:nowrap">Remove filtered</span></div></div>
<div style="position:absolute;left:545.5px;top:427.5px;width:85.2px;height:16.5px;box-sizing:border-box;border:1px solid #d0d0d0;border-radius:2.5px;background:linear-gradient(#fdfdfd,#ececec);box-shadow:0 0 0 1px rgba(255,255,255,0.6)"><div style="position:absolute;left:0;right:0;top:0;height:14.5px;line-height:14.5px;text-align:center;font-size:9.8px;color:#b8b8b8;letter-spacing:0;white-space:nowrap"><span style="display:inline-block;transform:scaleX(1.000);transform-origin:center center;letter-spacing:0;white-space:nowrap">Remove unfiltered</span></div></div>
<div style="position:absolute;left:16.0px;top:448.5px;width:61.2px;height:16.0px;box-sizing:border-box;border:1px solid #b4b4b4;border-radius:2.5px;background:linear-gradient(#fdfdfd,#ececec);box-shadow:0 0 0 1px rgba(255,255,255,0.6)"><div style="position:absolute;left:0;right:0;top:0;height:14.0px;line-height:14.0px;text-align:center;font-size:9.8px;color:#1a1a1a;letter-spacing:0;white-space:nowrap"><span style="display:inline-block;transform:scaleX(1.004);transform-origin:center center;letter-spacing:0;white-space:nowrap">Hot folders...</span></div></div>
<div style="position:absolute;left:8.6px;top:480.7px;height:12px;line-height:12px;font-size:9.8px;color:#1a1a1a;white-space:nowrap;letter-spacing:0;"><span style="display:inline-block;transform:scaleX(0.940);transform-origin:left center;letter-spacing:0;white-space:nowrap">Presets:</span></div>
<svg style="position:absolute;left:50.0px;top:482.0px" width="11" height="9" viewBox="0 0 11 9"><path d="M0.5,1.2 h3.6 l1,1.2 h5.4 v6 h-10z" fill="#e6c04a" stroke="#b08a1c" stroke-width="0.8"/><rect x="3" y="3.6" width="5" height="3.4" fill="#f6e8a6"/><rect x="4.4" y="4.2" width="2.2" height="2.2" fill="#6aa838"/></svg>
<div style="position:absolute;left:67.5px;top:478.5px;width:113.8px;height:16.4px;box-sizing:border-box;border:1px solid #b8b8b8;border-radius:2.5px;background:linear-gradient(#fefefe,#ececec)"><svg width="6" height="4" viewBox="0 0 6 4" style="position:absolute;right:4.2px;top:6px"><path d="M0.4,0.5 h5.2 L3,3.6Z" fill="#2a2a2a"/></svg></div>
<svg style="position:absolute;left:190.0px;top:482.1px" width="9" height="9" viewBox="0 0 9 9"><path d="M0.8,0.8 h5.9 l1.5,1.5 v5.9 h-7.4z" fill="#e8ecff" stroke="#5458b8" stroke-width="1.1"/><rect x="2.6" y="0.8" width="3.2" height="2.6" fill="#5458b8"/></svg>
<svg style="position:absolute;left:210.0px;top:482.1px" width="9" height="9" viewBox="0 0 9 9"><path d="M1.2,1.2 L7.8,7.8 M7.8,1.2 L1.2,7.8" stroke="#a8a8a8" stroke-width="2.2"/></svg>
<div style="position:absolute;left:253.0px;top:477.9px;width:114.0px;height:17.6px;box-sizing:border-box;border:1px solid #b4b4b4;border-radius:2.5px;background:linear-gradient(#fdfdfd,#ececec);box-shadow:0 0 0 1px rgba(255,255,255,0.6)"><svg width="10" height="11" viewBox="0 0 10 11" style="position:absolute;left:2.6px;top:2px"><rect x="0.6" y="2.4" width="7" height="8" fill="#fff" stroke="#777" stroke-width="0.8"/><rect x="4" y="0.4" width="5.4" height="5" fill="#8ac43a" stroke="#4a8a1a" stroke-width="0.6"/><path d="M2,6.4 h4 M2,8.2 h4" stroke="#999" stroke-width="0.7"/></svg><div style="position:absolute;left:13.5px;top:0;height:15.6px;line-height:15.6px;font-size:9.8px;color:#1a1a1a;letter-spacing:0;white-space:nowrap"><span style="display:inline-block;transform:scaleX(0.995);transform-origin:left center;letter-spacing:0;white-space:nowrap">Export for NConvert...</span></div></div>
<div style="position:absolute;left:432.6px;top:481.9px;width:9.6px;height:9.6px;background:#3b5998;border-radius:1px"><div style="position:absolute;left:4.4px;top:0.6px;font-size:10px;line-height:10px;font-weight:bold;color:#fff;letter-spacing:0">f</div></div>
<div style="position:absolute;left:454.0px;top:481.9px;width:9.6px;height:9.6px;background:#e4f0fa;border-radius:1.5px;box-shadow:inset 0 0 0 0.6px #a8c8e4"><svg width="9.6" height="9.6" viewBox="0 0 10 10"><path d="M2.4,2.2 v4 q0,1.8 1.8,1.8 h3 M2.4,4.4 h4.4" fill="none" stroke="#2a9ae0" stroke-width="1.7" stroke-linecap="round"/></svg></div>
<div style="position:absolute;left:529.0px;top:478.5px;width:53.0px;height:16.6px;box-sizing:border-box;border:1px solid #b4b4b4;border-radius:2.5px;background:linear-gradient(#fdfdfd,#ececec);box-shadow:0 0 0 1px rgba(255,255,255,0.6)"><svg width="12" height="11" viewBox="0 0 12 11" style="position:absolute;left:2px;top:2.4px"><rect x="0.5" y="0.6" width="7" height="6.4" fill="#7ab83a" stroke="#4a7a1a" stroke-width="0.6"/><rect x="3.4" y="3.2" width="8" height="7" fill="#e8a030" stroke="#a86810" stroke-width="0.6"/><rect x="4.6" y="4.6" width="3" height="2.4" fill="#d84830"/><rect x="7.6" y="6.4" width="3" height="3" fill="#f8d870"/></svg><div style="position:absolute;left:13.6px;top:0;height:14.6px;line-height:14.6px;font-size:9.8px;color:#1a1a1a;letter-spacing:0;white-space:nowrap"><span style="display:inline-block;transform:scaleX(0.985);transform-origin:left center;letter-spacing:0;white-space:nowrap"><u>C</u>onvert</span></div></div>
<div style="position:absolute;left:586.2px;top:478.5px;width:52.8px;height:16.6px;box-sizing:border-box;border:1px solid #b4b4b4;border-radius:2.5px;background:linear-gradient(#fdfdfd,#ececec);box-shadow:0 0 0 1px rgba(255,255,255,0.6)"><div style="position:absolute;left:0;right:0;top:0;height:14.6px;line-height:14.6px;text-align:center;font-size:9.8px;color:#1a1a1a;letter-spacing:0;white-space:nowrap"><span style="display:inline-block;transform:scaleX(0.930);transform-origin:center center;letter-spacing:0;white-space:nowrap">Close</span></div></div>
</div>
<svg id="chart" width="527" height="316" viewBox="58 481 527 316" style="position:absolute;left:58px;top:481px;font-family:'Liberation Sans',sans-serif">
<rect x="58" y="481" width="527" height="316" fill="#ffffff"/>
<text x="321" y="511.5" font-size="17.6" fill="#454545" text-anchor="middle" textLength="266" lengthAdjust="spacingAndGlyphs">Page Load Time (lower is better)</text>
<path d="M552,540.0 L160.5,540.0 L131,560.5" fill="none" stroke="#d9d9d9" stroke-width="1.1"/>
<text x="117.9" y="564.3" font-size="11.9" fill="#595959" text-anchor="end" textLength="35.8" lengthAdjust="spacingAndGlyphs">0.0014</text>
<path d="M552,566.3 L160.5,566.3 L131,586.8" fill="none" stroke="#d9d9d9" stroke-width="1.1"/>
<text x="117.9" y="590.6" font-size="11.9" fill="#595959" text-anchor="end" textLength="35.8" lengthAdjust="spacingAndGlyphs">0.0012</text>
<path d="M552,592.6 L160.5,592.6 L131,613.1" fill="none" stroke="#d9d9d9" stroke-width="1.1"/>
<text x="117.9" y="616.9" font-size="11.9" fill="#595959" text-anchor="end" textLength="29.3" lengthAdjust="spacingAndGlyphs">0.001</text>
<path d="M552,618.9 L160.5,618.9 L131,639.4" fill="none" stroke="#d9d9d9" stroke-width="1.1"/>
<text x="117.9" y="643.2" font-size="11.9" fill="#595959" text-anchor="end" textLength="35.8" lengthAdjust="spacingAndGlyphs">0.0008</text>
<path d="M552,645.2 L160.5,645.2 L131,665.7" fill="none" stroke="#d9d9d9" stroke-width="1.1"/>
<text x="117.9" y="669.5" font-size="11.9" fill="#595959" text-anchor="end" textLength="35.8" lengthAdjust="spacingAndGlyphs">0.0006</text>
<path d="M552,671.5 L160.5,671.5 L131,692.0" fill="none" stroke="#d9d9d9" stroke-width="1.1"/>
<text x="117.9" y="695.8" font-size="11.9" fill="#595959" text-anchor="end" textLength="35.8" lengthAdjust="spacingAndGlyphs">0.0004</text>
<path d="M552,697.8 L160.5,697.8 L131,718.3" fill="none" stroke="#d9d9d9" stroke-width="1.1"/>
<text x="117.9" y="722.1" font-size="11.9" fill="#595959" text-anchor="end" textLength="35.8" lengthAdjust="spacingAndGlyphs">0.0002</text>
<path d="M552,724.1 L160.5,724.1 L131,744.6" fill="none" stroke="#d9d9d9" stroke-width="1.1"/>
<text x="117.9" y="748.4" font-size="11.9" fill="#595959" text-anchor="end" textLength="6.2" lengthAdjust="spacingAndGlyphs">0</text>
<path d="M162.8,561.0 h31.4 v177.0 h-31.4 Z" fill="#4472c4"/>
<path d="M194.2,561.0 l10.5,-8.0 v177.0 l-10.5,8.0 Z" fill="#264478"/>
<path d="M162.8,561.0 l10.5,-8.0 h31.4 l-10.5,8.0 Z" fill="#2f5597"/>
<path d="M241.6,579.0 h31.4 v159.0 h-31.4 Z" fill="#4472c4"/>
<path d="M273.0,579.0 l10.5,-8.0 v159.0 l-10.5,8.0 Z" fill="#264478"/>
<path d="M241.6,579.0 l10.5,-8.0 h31.4 l-10.5,8.0 Z" fill="#2f5597"/>
<path d="M320.6,596.0 h31.4 v142.0 h-31.4 Z" fill="#4472c4"/>
<path d="M352.0,596.0 l10.5,-8.0 v142.0 l-10.5,8.0 Z" fill="#264478"/>
<path d="M320.6,596.0 l10.5,-8.0 h31.4 l-10.5,8.0 Z" fill="#2f5597"/>
<path d="M399.6,596.0 h31.4 v142.0 h-31.4 Z" fill="#4472c4"/>
<path d="M431.0,596.0 l10.5,-8.0 v142.0 l-10.5,8.0 Z" fill="#264478"/>
<path d="M399.6,596.0 l10.5,-8.0 h31.4 l-10.5,8.0 Z" fill="#2f5597"/>
<path d="M478.5,602.7 h31.4 v135.3 h-31.4 Z" fill="#4472c4"/>
<path d="M509.9,602.7 l10.5,-8.0 v135.3 l-10.5,8.0 Z" fill="#264478"/>
<path d="M478.5,602.7 l10.5,-8.0 h31.4 l-10.5,8.0 Z" fill="#2f5597"/>
<text x="170.0" y="766" font-size="12" fill="#595959" text-anchor="middle" textLength="63" lengthAdjust="spacingAndGlyphs">Raw Images</text>
<text x="249.2" y="766" font-size="12" fill="#595959" text-anchor="middle" textLength="57.5" lengthAdjust="spacingAndGlyphs">Photoshop</text>
<text x="328.0" y="766" font-size="12" fill="#595959" text-anchor="middle" textLength="25" lengthAdjust="spacingAndGlyphs">RIOT</text>
<text x="406.8" y="766" font-size="12" fill="#595959" text-anchor="middle" textLength="57.5" lengthAdjust="spacingAndGlyphs">XNConvert</text>
<text x="406.8" y="782" font-size="12" fill="#595959" text-anchor="middle" textLength="28" lengthAdjust="spacingAndGlyphs">(JPG)</text>
<text x="485.6" y="766" font-size="12" fill="#595959" text-anchor="middle" textLength="57.5" lengthAdjust="spacingAndGlyphs">XNConvert</text>
<text x="485.6" y="782" font-size="12" fill="#595959" text-anchor="middle" textLength="40" lengthAdjust="spacingAndGlyphs">(Webp)</text>
</svg>
</body></html>
